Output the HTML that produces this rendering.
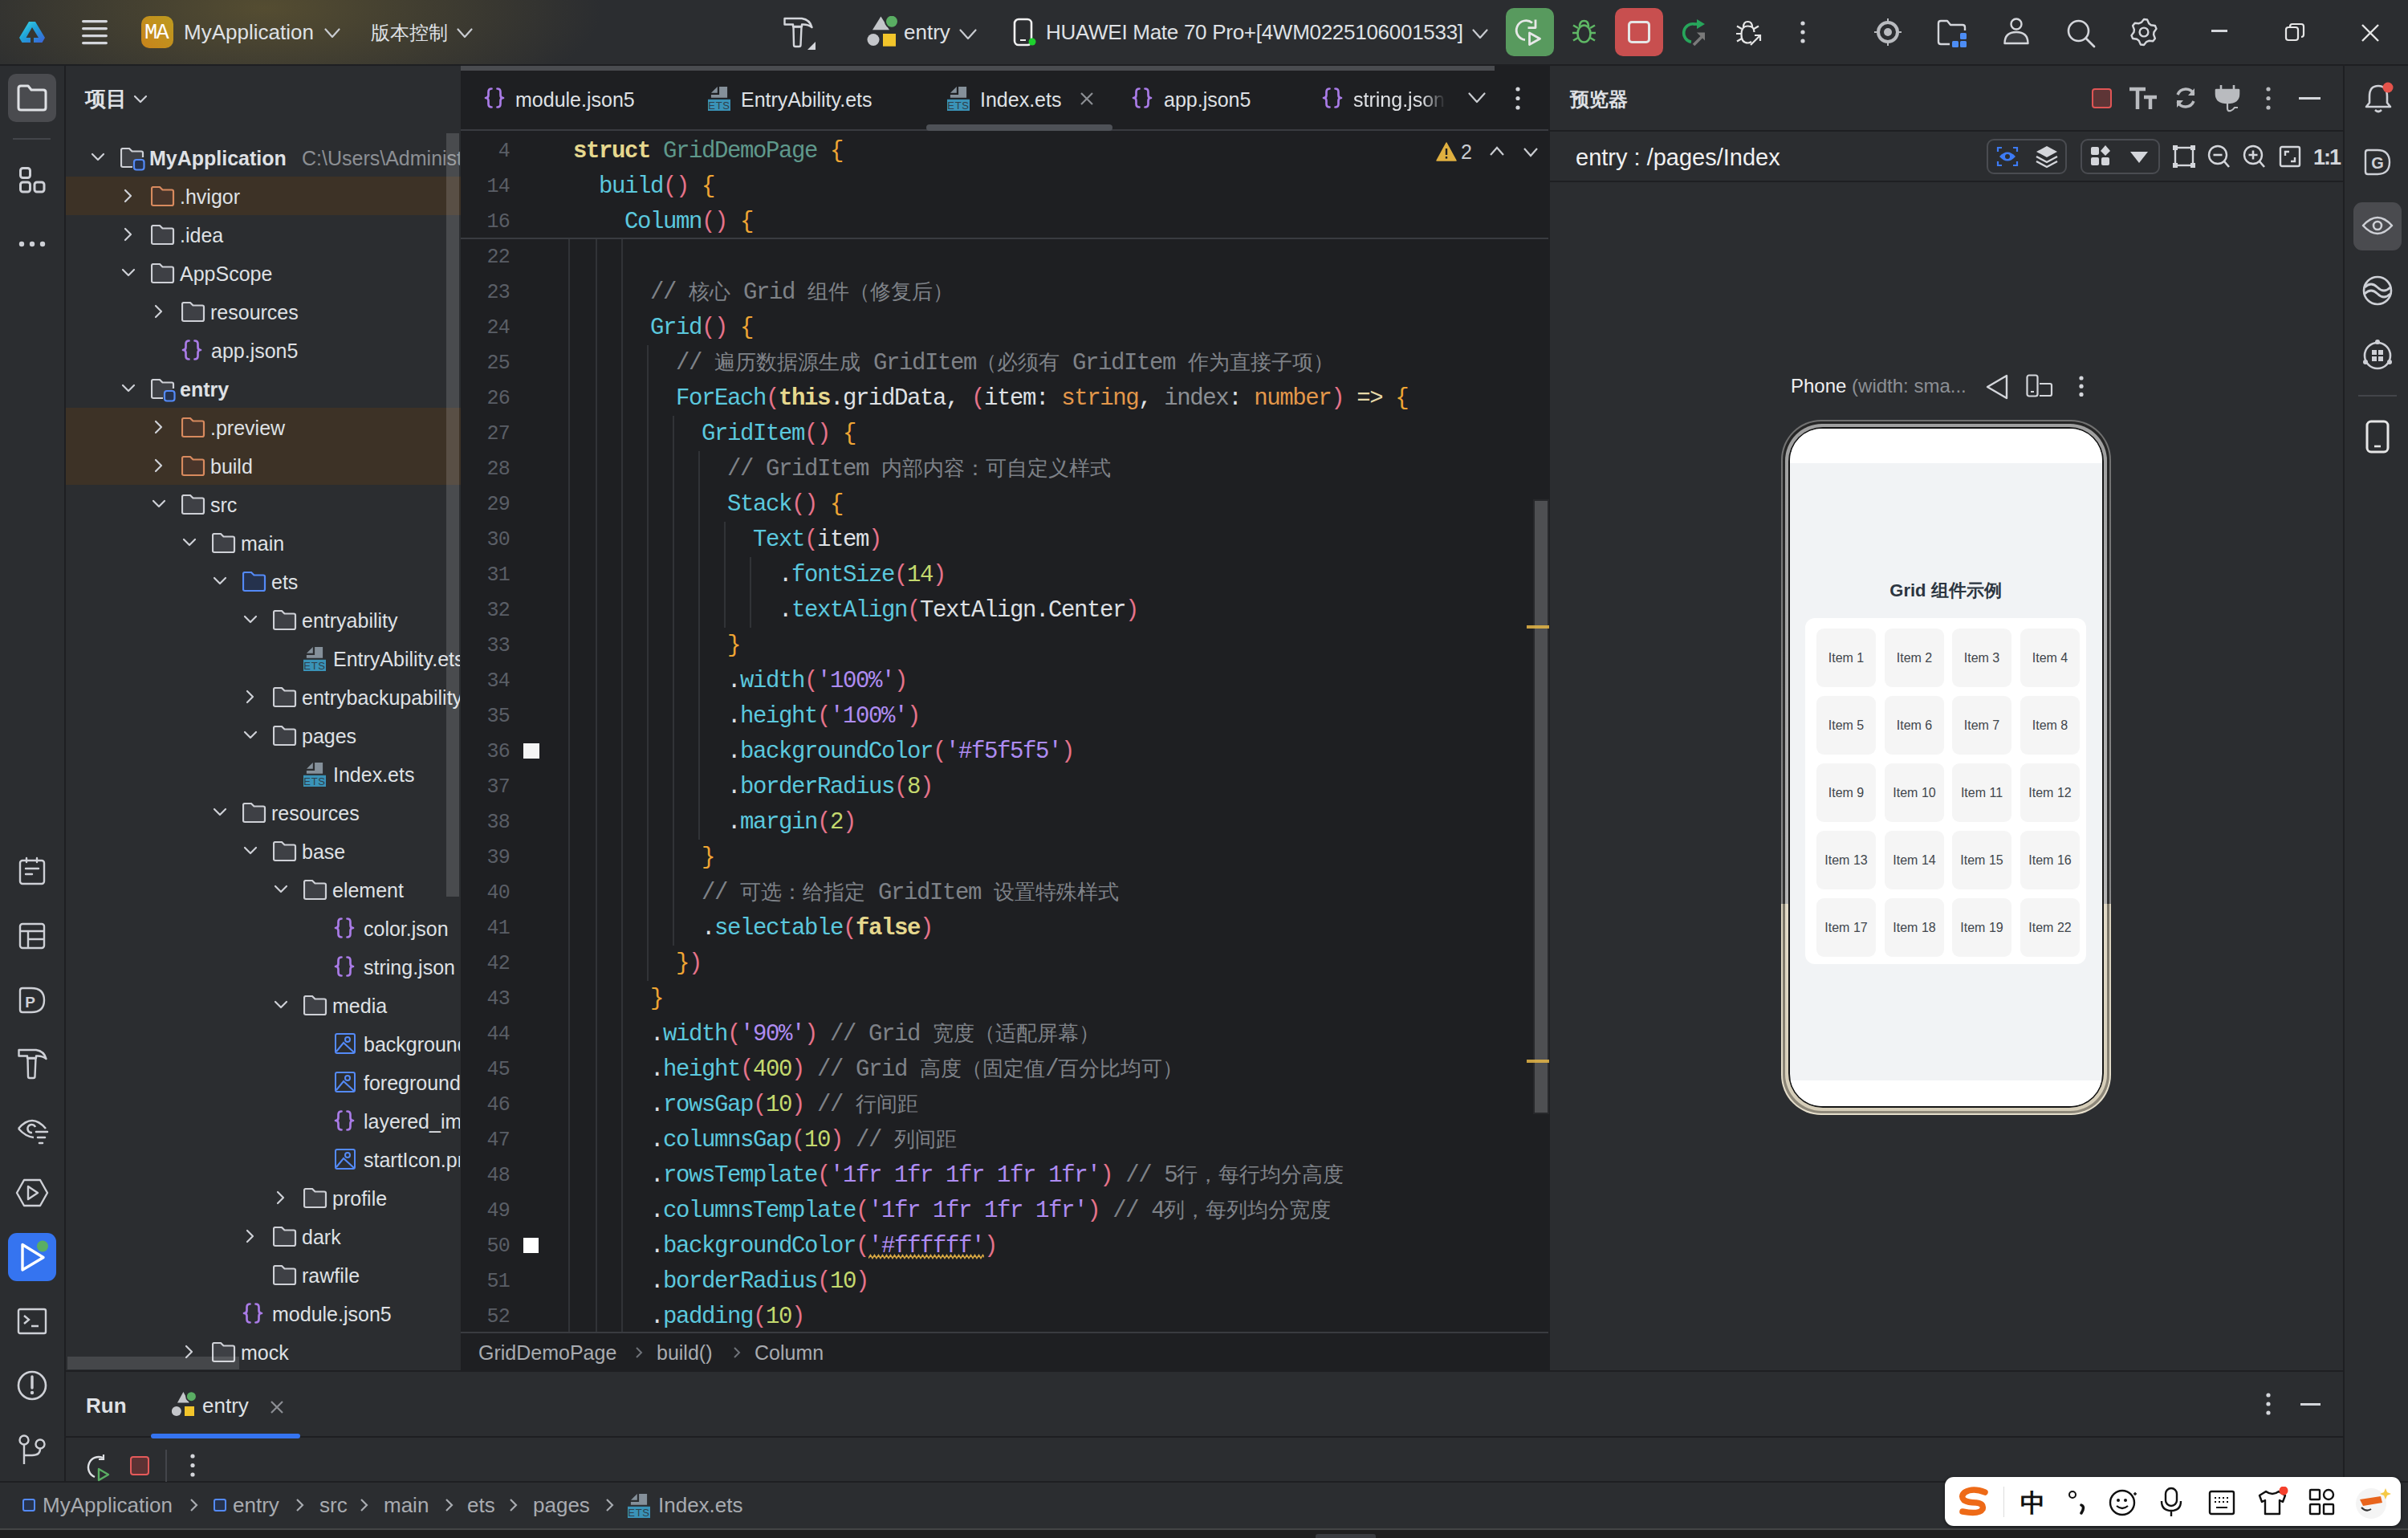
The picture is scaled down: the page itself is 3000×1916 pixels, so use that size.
<!DOCTYPE html><html><head><meta charset="utf-8"><style>
*{margin:0;padding:0;box-sizing:border-box}
html,body{width:3000px;height:1916px;overflow:hidden;background:#2B2D30;font-family:'Liberation Sans', sans-serif}
.a{position:absolute}
.t{white-space:nowrap}
</style></head><body><div class="a" style="left:0px;top:0px;width:3000px;height:80px;background:radial-gradient(ellipse 420px 150px at 330px 10px, rgba(110,96,50,0.62), rgba(43,45,48,0) 100%),#2B2D30"></div><div class="a" style="left:0px;top:80px;width:3000px;height:2px;background:#1E1F22"></div><div class="a" style="left:0px;top:82px;width:80px;height:1764px;background:#2B2D30"></div><div class="a" style="left:80px;top:82px;width:2px;height:1764px;background:#1E1F22"></div><div class="a" style="left:82px;top:82px;width:492px;height:1626px;background:#2B2D30"></div><div class="a" style="left:574px;top:82px;width:1357px;height:1626px;background:#1E1F22"></div><div class="a" style="left:1931px;top:82px;width:990px;height:1626px;background:#2B2D30"></div><div class="a" style="left:1929px;top:82px;width:2px;height:1626px;background:#1E1F22"></div><div class="a" style="left:2921px;top:82px;width:79px;height:1764px;background:#2B2D30"></div><div class="a" style="left:2919px;top:82px;width:2px;height:1764px;background:#1E1F22"></div><div class="a" style="left:82px;top:1708px;width:2837px;height:138px;background:#2B2D30"></div><div class="a" style="left:82px;top:1707px;width:2837px;height:2px;background:#1E1F22"></div><div class="a" style="left:82px;top:1789px;width:2837px;height:2px;background:#1E1F22"></div><div class="a" style="left:0px;top:1845px;width:3000px;height:2px;background:#1E1F22"></div><div class="a" style="left:0px;top:1847px;width:3000px;height:57px;background:#2B2D30"></div><div class="a" style="left:0px;top:1904px;width:3000px;height:2px;background:#444546"></div><div class="a" style="left:0px;top:1906px;width:3000px;height:10px;background:#1F1F1F"></div><div class="a t" style="left:106px;top:102.5px;height:41px;line-height:41px;font-size:26px;color:#DFE1E5;font-weight:bold;font-family:'Liberation Sans', sans-serif;">项目</div><svg class="a" style="left:166px;top:118px;" width="18" height="12" viewBox="0 0 18 12" fill="none"><path d="M2 2 L9 9 L16 2" stroke="#CED0D6" stroke-width="2.2" stroke-linecap="round" stroke-linejoin="round"/></svg><div class="a" style="left:82px;top:220px;width:492px;height:48px;background:#3D3226"></div><div class="a" style="left:82px;top:508px;width:492px;height:96px;background:#3D3226"></div><div class="a" style="left:82px;top:166px;width:491px;height:1540px;overflow:hidden"></div><div class="a" style="left:0;top:166px;width:573px;height:1540px;overflow:hidden"><div class="a" style="left:0;top:-166px;width:573px;height:1916px"><svg class="a" style="left:113px;top:190px;" width="18" height="12" viewBox="0 0 18 12" fill="none"><path d="M2 2 L9 9 L16 2" stroke="#CED0D6" stroke-width="2.2" stroke-linecap="round" stroke-linejoin="round"/></svg><svg class="a" style="left:150px;top:184px;" width="31" height="29" viewBox="0 0 31 29" fill="none"><path d="M28 12 L28 6.5 Q28 4.5 26 4.5 L14.5 4.5 L11 1 L3 1 Q1 1 1 3 L1 22 Q1 24 3 24 L15 24" fill="#3E4045" stroke="#CED0D6" stroke-width="2.2" stroke-linejoin="round"/><rect x="17" y="15" width="12.5" height="12.5" rx="3" fill="#25324D" stroke="#548AF7" stroke-width="2.2"/></svg><div class="a t" style="left:186px;top:177.0px;height:40px;line-height:40px;font-size:25px;color:#DFE1E5;font-weight:bold;font-family:'Liberation Sans', sans-serif;">MyApplication</div><div class="a t" style="left:376px;top:177.0px;height:40px;line-height:40px;font-size:25px;color:#8C8F94;font-weight:normal;font-family:'Liberation Sans', sans-serif;">C:\Users\Administrator\DevEcoStudioProjects\MyApplication</div><svg class="a" style="left:153px;top:235px;" width="14" height="18" viewBox="0 0 14 18" fill="none"><path d="M3 2 L10 9 L3 16" stroke="#CED0D6" stroke-width="2.2" stroke-linecap="round" stroke-linejoin="round"/></svg><svg class="a" style="left:188px;top:232px;" width="31" height="29" viewBox="0 0 31 29" fill="none"><path d="M1 3 Q1 1 3 1 L11 1 L14.5 4.5 L26 4.5 Q28 4.5 28 6.5 L28 22 Q28 24 26 24 L3 24 Q1 24 1 22 Z" fill="#49352A" stroke="#D88A5E" stroke-width="2.2" stroke-linejoin="round"/></svg><div class="a t" style="left:224px;top:225.0px;height:40px;line-height:40px;font-size:25px;color:#DFE1E5;font-weight:normal;font-family:'Liberation Sans', sans-serif;">.hvigor</div><svg class="a" style="left:153px;top:283px;" width="14" height="18" viewBox="0 0 14 18" fill="none"><path d="M3 2 L10 9 L3 16" stroke="#CED0D6" stroke-width="2.2" stroke-linecap="round" stroke-linejoin="round"/></svg><svg class="a" style="left:188px;top:280px;" width="31" height="29" viewBox="0 0 31 29" fill="none"><path d="M1 3 Q1 1 3 1 L11 1 L14.5 4.5 L26 4.5 Q28 4.5 28 6.5 L28 22 Q28 24 26 24 L3 24 Q1 24 1 22 Z" fill="#3E4045" stroke="#CED0D6" stroke-width="2.2" stroke-linejoin="round"/></svg><div class="a t" style="left:224px;top:273.0px;height:40px;line-height:40px;font-size:25px;color:#DFE1E5;font-weight:normal;font-family:'Liberation Sans', sans-serif;">.idea</div><svg class="a" style="left:151px;top:334px;" width="18" height="12" viewBox="0 0 18 12" fill="none"><path d="M2 2 L9 9 L16 2" stroke="#CED0D6" stroke-width="2.2" stroke-linecap="round" stroke-linejoin="round"/></svg><svg class="a" style="left:188px;top:328px;" width="31" height="29" viewBox="0 0 31 29" fill="none"><path d="M1 3 Q1 1 3 1 L11 1 L14.5 4.5 L26 4.5 Q28 4.5 28 6.5 L28 22 Q28 24 26 24 L3 24 Q1 24 1 22 Z" fill="#3E4045" stroke="#CED0D6" stroke-width="2.2" stroke-linejoin="round"/></svg><div class="a t" style="left:224px;top:321.0px;height:40px;line-height:40px;font-size:25px;color:#DFE1E5;font-weight:normal;font-family:'Liberation Sans', sans-serif;">AppScope</div><svg class="a" style="left:191px;top:379px;" width="14" height="18" viewBox="0 0 14 18" fill="none"><path d="M3 2 L10 9 L3 16" stroke="#CED0D6" stroke-width="2.2" stroke-linecap="round" stroke-linejoin="round"/></svg><svg class="a" style="left:226px;top:376px;" width="31" height="29" viewBox="0 0 31 29" fill="none"><path d="M1 3 Q1 1 3 1 L11 1 L14.5 4.5 L26 4.5 Q28 4.5 28 6.5 L28 22 Q28 24 26 24 L3 24 Q1 24 1 22 Z" fill="#3E4045" stroke="#CED0D6" stroke-width="2.2" stroke-linejoin="round"/></svg><div class="a t" style="left:262px;top:369.0px;height:40px;line-height:40px;font-size:25px;color:#DFE1E5;font-weight:normal;font-family:'Liberation Sans', sans-serif;">resources</div><svg class="a" style="left:226px;top:422px;" width="26" height="28" viewBox="0 0 26 28" fill="none"><path d="M9.5 2.5 Q5.5 2.5 5.5 6.5 L5.5 10.5 Q5.5 14 2 14 Q5.5 14 5.5 17.5 L5.5 21.5 Q5.5 25.5 9.5 25.5 M16.5 2.5 Q20.5 2.5 20.5 6.5 L20.5 10.5 Q20.5 14 24 14 Q20.5 14 20.5 17.5 L20.5 21.5 Q20.5 25.5 16.5 25.5" stroke="#A97BE6" stroke-width="2.7" stroke-linecap="round" stroke-linejoin="round"/></svg><div class="a t" style="left:263px;top:417.0px;height:40px;line-height:40px;font-size:25px;color:#DFE1E5;font-weight:normal;font-family:'Liberation Sans', sans-serif;">app.json5</div><svg class="a" style="left:151px;top:478px;" width="18" height="12" viewBox="0 0 18 12" fill="none"><path d="M2 2 L9 9 L16 2" stroke="#CED0D6" stroke-width="2.2" stroke-linecap="round" stroke-linejoin="round"/></svg><svg class="a" style="left:188px;top:472px;" width="31" height="29" viewBox="0 0 31 29" fill="none"><path d="M28 12 L28 6.5 Q28 4.5 26 4.5 L14.5 4.5 L11 1 L3 1 Q1 1 1 3 L1 22 Q1 24 3 24 L15 24" fill="#3E4045" stroke="#CED0D6" stroke-width="2.2" stroke-linejoin="round"/><rect x="17" y="15" width="12.5" height="12.5" rx="3" fill="#25324D" stroke="#548AF7" stroke-width="2.2"/></svg><div class="a t" style="left:224px;top:465.0px;height:40px;line-height:40px;font-size:25px;color:#DFE1E5;font-weight:bold;font-family:'Liberation Sans', sans-serif;">entry</div><svg class="a" style="left:191px;top:523px;" width="14" height="18" viewBox="0 0 14 18" fill="none"><path d="M3 2 L10 9 L3 16" stroke="#CED0D6" stroke-width="2.2" stroke-linecap="round" stroke-linejoin="round"/></svg><svg class="a" style="left:226px;top:520px;" width="31" height="29" viewBox="0 0 31 29" fill="none"><path d="M1 3 Q1 1 3 1 L11 1 L14.5 4.5 L26 4.5 Q28 4.5 28 6.5 L28 22 Q28 24 26 24 L3 24 Q1 24 1 22 Z" fill="#49352A" stroke="#D88A5E" stroke-width="2.2" stroke-linejoin="round"/></svg><div class="a t" style="left:262px;top:513.0px;height:40px;line-height:40px;font-size:25px;color:#DFE1E5;font-weight:normal;font-family:'Liberation Sans', sans-serif;">.preview</div><svg class="a" style="left:191px;top:571px;" width="14" height="18" viewBox="0 0 14 18" fill="none"><path d="M3 2 L10 9 L3 16" stroke="#CED0D6" stroke-width="2.2" stroke-linecap="round" stroke-linejoin="round"/></svg><svg class="a" style="left:226px;top:568px;" width="31" height="29" viewBox="0 0 31 29" fill="none"><path d="M1 3 Q1 1 3 1 L11 1 L14.5 4.5 L26 4.5 Q28 4.5 28 6.5 L28 22 Q28 24 26 24 L3 24 Q1 24 1 22 Z" fill="#49352A" stroke="#D88A5E" stroke-width="2.2" stroke-linejoin="round"/></svg><div class="a t" style="left:262px;top:561.0px;height:40px;line-height:40px;font-size:25px;color:#DFE1E5;font-weight:normal;font-family:'Liberation Sans', sans-serif;">build</div><svg class="a" style="left:189px;top:622px;" width="18" height="12" viewBox="0 0 18 12" fill="none"><path d="M2 2 L9 9 L16 2" stroke="#CED0D6" stroke-width="2.2" stroke-linecap="round" stroke-linejoin="round"/></svg><svg class="a" style="left:226px;top:616px;" width="31" height="29" viewBox="0 0 31 29" fill="none"><path d="M1 3 Q1 1 3 1 L11 1 L14.5 4.5 L26 4.5 Q28 4.5 28 6.5 L28 22 Q28 24 26 24 L3 24 Q1 24 1 22 Z" fill="#3E4045" stroke="#CED0D6" stroke-width="2.2" stroke-linejoin="round"/></svg><div class="a t" style="left:262px;top:609.0px;height:40px;line-height:40px;font-size:25px;color:#DFE1E5;font-weight:normal;font-family:'Liberation Sans', sans-serif;">src</div><svg class="a" style="left:227px;top:670px;" width="18" height="12" viewBox="0 0 18 12" fill="none"><path d="M2 2 L9 9 L16 2" stroke="#CED0D6" stroke-width="2.2" stroke-linecap="round" stroke-linejoin="round"/></svg><svg class="a" style="left:264px;top:664px;" width="31" height="29" viewBox="0 0 31 29" fill="none"><path d="M1 3 Q1 1 3 1 L11 1 L14.5 4.5 L26 4.5 Q28 4.5 28 6.5 L28 22 Q28 24 26 24 L3 24 Q1 24 1 22 Z" fill="#3E4045" stroke="#CED0D6" stroke-width="2.2" stroke-linejoin="round"/></svg><div class="a t" style="left:300px;top:657.0px;height:40px;line-height:40px;font-size:25px;color:#DFE1E5;font-weight:normal;font-family:'Liberation Sans', sans-serif;">main</div><svg class="a" style="left:265px;top:718px;" width="18" height="12" viewBox="0 0 18 12" fill="none"><path d="M2 2 L9 9 L16 2" stroke="#CED0D6" stroke-width="2.2" stroke-linecap="round" stroke-linejoin="round"/></svg><svg class="a" style="left:302px;top:712px;" width="31" height="29" viewBox="0 0 31 29" fill="none"><path d="M1 3 Q1 1 3 1 L11 1 L14.5 4.5 L26 4.5 Q28 4.5 28 6.5 L28 22 Q28 24 26 24 L3 24 Q1 24 1 22 Z" fill="#25324D" stroke="#548AF7" stroke-width="2.2" stroke-linejoin="round"/></svg><div class="a t" style="left:338px;top:705.0px;height:40px;line-height:40px;font-size:25px;color:#DFE1E5;font-weight:normal;font-family:'Liberation Sans', sans-serif;">ets</div><svg class="a" style="left:303px;top:766px;" width="18" height="12" viewBox="0 0 18 12" fill="none"><path d="M2 2 L9 9 L16 2" stroke="#CED0D6" stroke-width="2.2" stroke-linecap="round" stroke-linejoin="round"/></svg><svg class="a" style="left:340px;top:760px;" width="31" height="29" viewBox="0 0 31 29" fill="none"><path d="M1 3 Q1 1 3 1 L11 1 L14.5 4.5 L26 4.5 Q28 4.5 28 6.5 L28 22 Q28 24 26 24 L3 24 Q1 24 1 22 Z" fill="#3E4045" stroke="#CED0D6" stroke-width="2.2" stroke-linejoin="round"/></svg><div class="a t" style="left:376px;top:753.0px;height:40px;line-height:40px;font-size:25px;color:#DFE1E5;font-weight:normal;font-family:'Liberation Sans', sans-serif;">entryability</div><svg class="a" style="left:378px;top:805px;" width="30" height="32" viewBox="0 0 30 32" fill="none"><path d="M4 8.8 L11.8 0.9 L11.8 8.8 Z" fill="#85909A"/><path d="M14.1 0.9 L24.1 0.9 L24.1 14.8 L3.9 14.8 L3.9 11.1 L14.1 11.1 Z" fill="#85909A"/><rect x="0" y="16.8" width="28" height="14.2" fill="#3A93B8"/><text x="14" y="29" font-family="Liberation Sans" font-size="13" fill="#2F3F4A" text-anchor="middle" letter-spacing="0.8">ETS</text></svg><div class="a t" style="left:415px;top:801.0px;height:40px;line-height:40px;font-size:25px;color:#DFE1E5;font-weight:normal;font-family:'Liberation Sans', sans-serif;">EntryAbility.ets</div><svg class="a" style="left:305px;top:859px;" width="14" height="18" viewBox="0 0 14 18" fill="none"><path d="M3 2 L10 9 L3 16" stroke="#CED0D6" stroke-width="2.2" stroke-linecap="round" stroke-linejoin="round"/></svg><svg class="a" style="left:340px;top:856px;" width="31" height="29" viewBox="0 0 31 29" fill="none"><path d="M1 3 Q1 1 3 1 L11 1 L14.5 4.5 L26 4.5 Q28 4.5 28 6.5 L28 22 Q28 24 26 24 L3 24 Q1 24 1 22 Z" fill="#3E4045" stroke="#CED0D6" stroke-width="2.2" stroke-linejoin="round"/></svg><div class="a t" style="left:376px;top:849.0px;height:40px;line-height:40px;font-size:25px;color:#DFE1E5;font-weight:normal;font-family:'Liberation Sans', sans-serif;">entrybackupability</div><svg class="a" style="left:303px;top:910px;" width="18" height="12" viewBox="0 0 18 12" fill="none"><path d="M2 2 L9 9 L16 2" stroke="#CED0D6" stroke-width="2.2" stroke-linecap="round" stroke-linejoin="round"/></svg><svg class="a" style="left:340px;top:904px;" width="31" height="29" viewBox="0 0 31 29" fill="none"><path d="M1 3 Q1 1 3 1 L11 1 L14.5 4.5 L26 4.5 Q28 4.5 28 6.5 L28 22 Q28 24 26 24 L3 24 Q1 24 1 22 Z" fill="#3E4045" stroke="#CED0D6" stroke-width="2.2" stroke-linejoin="round"/></svg><div class="a t" style="left:376px;top:897.0px;height:40px;line-height:40px;font-size:25px;color:#DFE1E5;font-weight:normal;font-family:'Liberation Sans', sans-serif;">pages</div><svg class="a" style="left:378px;top:949px;" width="30" height="32" viewBox="0 0 30 32" fill="none"><path d="M4 8.8 L11.8 0.9 L11.8 8.8 Z" fill="#85909A"/><path d="M14.1 0.9 L24.1 0.9 L24.1 14.8 L3.9 14.8 L3.9 11.1 L14.1 11.1 Z" fill="#85909A"/><rect x="0" y="16.8" width="28" height="14.2" fill="#3A93B8"/><text x="14" y="29" font-family="Liberation Sans" font-size="13" fill="#2F3F4A" text-anchor="middle" letter-spacing="0.8">ETS</text></svg><div class="a t" style="left:415px;top:945.0px;height:40px;line-height:40px;font-size:25px;color:#DFE1E5;font-weight:normal;font-family:'Liberation Sans', sans-serif;">Index.ets</div><svg class="a" style="left:265px;top:1006px;" width="18" height="12" viewBox="0 0 18 12" fill="none"><path d="M2 2 L9 9 L16 2" stroke="#CED0D6" stroke-width="2.2" stroke-linecap="round" stroke-linejoin="round"/></svg><svg class="a" style="left:302px;top:1000px;" width="31" height="29" viewBox="0 0 31 29" fill="none"><path d="M1 3 Q1 1 3 1 L11 1 L14.5 4.5 L26 4.5 Q28 4.5 28 6.5 L28 22 Q28 24 26 24 L3 24 Q1 24 1 22 Z" fill="#3E4045" stroke="#CED0D6" stroke-width="2.2" stroke-linejoin="round"/></svg><div class="a t" style="left:338px;top:993.0px;height:40px;line-height:40px;font-size:25px;color:#DFE1E5;font-weight:normal;font-family:'Liberation Sans', sans-serif;">resources</div><svg class="a" style="left:303px;top:1054px;" width="18" height="12" viewBox="0 0 18 12" fill="none"><path d="M2 2 L9 9 L16 2" stroke="#CED0D6" stroke-width="2.2" stroke-linecap="round" stroke-linejoin="round"/></svg><svg class="a" style="left:340px;top:1048px;" width="31" height="29" viewBox="0 0 31 29" fill="none"><path d="M1 3 Q1 1 3 1 L11 1 L14.5 4.5 L26 4.5 Q28 4.5 28 6.5 L28 22 Q28 24 26 24 L3 24 Q1 24 1 22 Z" fill="#3E4045" stroke="#CED0D6" stroke-width="2.2" stroke-linejoin="round"/></svg><div class="a t" style="left:376px;top:1041.0px;height:40px;line-height:40px;font-size:25px;color:#DFE1E5;font-weight:normal;font-family:'Liberation Sans', sans-serif;">base</div><svg class="a" style="left:341px;top:1102px;" width="18" height="12" viewBox="0 0 18 12" fill="none"><path d="M2 2 L9 9 L16 2" stroke="#CED0D6" stroke-width="2.2" stroke-linecap="round" stroke-linejoin="round"/></svg><svg class="a" style="left:378px;top:1096px;" width="31" height="29" viewBox="0 0 31 29" fill="none"><path d="M1 3 Q1 1 3 1 L11 1 L14.5 4.5 L26 4.5 Q28 4.5 28 6.5 L28 22 Q28 24 26 24 L3 24 Q1 24 1 22 Z" fill="#3E4045" stroke="#CED0D6" stroke-width="2.2" stroke-linejoin="round"/></svg><div class="a t" style="left:414px;top:1089.0px;height:40px;line-height:40px;font-size:25px;color:#DFE1E5;font-weight:normal;font-family:'Liberation Sans', sans-serif;">element</div><svg class="a" style="left:416px;top:1142px;" width="26" height="28" viewBox="0 0 26 28" fill="none"><path d="M9.5 2.5 Q5.5 2.5 5.5 6.5 L5.5 10.5 Q5.5 14 2 14 Q5.5 14 5.5 17.5 L5.5 21.5 Q5.5 25.5 9.5 25.5 M16.5 2.5 Q20.5 2.5 20.5 6.5 L20.5 10.5 Q20.5 14 24 14 Q20.5 14 20.5 17.5 L20.5 21.5 Q20.5 25.5 16.5 25.5" stroke="#A97BE6" stroke-width="2.7" stroke-linecap="round" stroke-linejoin="round"/></svg><div class="a t" style="left:453px;top:1137.0px;height:40px;line-height:40px;font-size:25px;color:#DFE1E5;font-weight:normal;font-family:'Liberation Sans', sans-serif;">color.json</div><svg class="a" style="left:416px;top:1190px;" width="26" height="28" viewBox="0 0 26 28" fill="none"><path d="M9.5 2.5 Q5.5 2.5 5.5 6.5 L5.5 10.5 Q5.5 14 2 14 Q5.5 14 5.5 17.5 L5.5 21.5 Q5.5 25.5 9.5 25.5 M16.5 2.5 Q20.5 2.5 20.5 6.5 L20.5 10.5 Q20.5 14 24 14 Q20.5 14 20.5 17.5 L20.5 21.5 Q20.5 25.5 16.5 25.5" stroke="#A97BE6" stroke-width="2.7" stroke-linecap="round" stroke-linejoin="round"/></svg><div class="a t" style="left:453px;top:1185.0px;height:40px;line-height:40px;font-size:25px;color:#DFE1E5;font-weight:normal;font-family:'Liberation Sans', sans-serif;">string.json</div><svg class="a" style="left:341px;top:1246px;" width="18" height="12" viewBox="0 0 18 12" fill="none"><path d="M2 2 L9 9 L16 2" stroke="#CED0D6" stroke-width="2.2" stroke-linecap="round" stroke-linejoin="round"/></svg><svg class="a" style="left:378px;top:1240px;" width="31" height="29" viewBox="0 0 31 29" fill="none"><path d="M1 3 Q1 1 3 1 L11 1 L14.5 4.5 L26 4.5 Q28 4.5 28 6.5 L28 22 Q28 24 26 24 L3 24 Q1 24 1 22 Z" fill="#3E4045" stroke="#CED0D6" stroke-width="2.2" stroke-linejoin="round"/></svg><div class="a t" style="left:414px;top:1233.0px;height:40px;line-height:40px;font-size:25px;color:#DFE1E5;font-weight:normal;font-family:'Liberation Sans', sans-serif;">media</div><svg class="a" style="left:416px;top:1286px;" width="28" height="28" viewBox="0 0 28 28" fill="none"><rect x="2" y="2" width="24" height="24" rx="2" stroke="#548AF7" stroke-width="2"/><circle cx="17" cy="9" r="3" stroke="#548AF7" stroke-width="2"/><path d="M3 24 L12 13 L25 25" stroke="#548AF7" stroke-width="2"/></svg><div class="a t" style="left:453px;top:1281.0px;height:40px;line-height:40px;font-size:25px;color:#DFE1E5;font-weight:normal;font-family:'Liberation Sans', sans-serif;">background.png</div><svg class="a" style="left:416px;top:1334px;" width="28" height="28" viewBox="0 0 28 28" fill="none"><rect x="2" y="2" width="24" height="24" rx="2" stroke="#548AF7" stroke-width="2"/><circle cx="17" cy="9" r="3" stroke="#548AF7" stroke-width="2"/><path d="M3 24 L12 13 L25 25" stroke="#548AF7" stroke-width="2"/></svg><div class="a t" style="left:453px;top:1329.0px;height:40px;line-height:40px;font-size:25px;color:#DFE1E5;font-weight:normal;font-family:'Liberation Sans', sans-serif;">foreground.png</div><svg class="a" style="left:416px;top:1382px;" width="26" height="28" viewBox="0 0 26 28" fill="none"><path d="M9.5 2.5 Q5.5 2.5 5.5 6.5 L5.5 10.5 Q5.5 14 2 14 Q5.5 14 5.5 17.5 L5.5 21.5 Q5.5 25.5 9.5 25.5 M16.5 2.5 Q20.5 2.5 20.5 6.5 L20.5 10.5 Q20.5 14 24 14 Q20.5 14 20.5 17.5 L20.5 21.5 Q20.5 25.5 16.5 25.5" stroke="#A97BE6" stroke-width="2.7" stroke-linecap="round" stroke-linejoin="round"/></svg><div class="a t" style="left:453px;top:1377.0px;height:40px;line-height:40px;font-size:25px;color:#DFE1E5;font-weight:normal;font-family:'Liberation Sans', sans-serif;">layered_image.json</div><svg class="a" style="left:416px;top:1430px;" width="28" height="28" viewBox="0 0 28 28" fill="none"><rect x="2" y="2" width="24" height="24" rx="2" stroke="#548AF7" stroke-width="2"/><circle cx="17" cy="9" r="3" stroke="#548AF7" stroke-width="2"/><path d="M3 24 L12 13 L25 25" stroke="#548AF7" stroke-width="2"/></svg><div class="a t" style="left:453px;top:1425.0px;height:40px;line-height:40px;font-size:25px;color:#DFE1E5;font-weight:normal;font-family:'Liberation Sans', sans-serif;">startIcon.png</div><svg class="a" style="left:343px;top:1483px;" width="14" height="18" viewBox="0 0 14 18" fill="none"><path d="M3 2 L10 9 L3 16" stroke="#CED0D6" stroke-width="2.2" stroke-linecap="round" stroke-linejoin="round"/></svg><svg class="a" style="left:378px;top:1480px;" width="31" height="29" viewBox="0 0 31 29" fill="none"><path d="M1 3 Q1 1 3 1 L11 1 L14.5 4.5 L26 4.5 Q28 4.5 28 6.5 L28 22 Q28 24 26 24 L3 24 Q1 24 1 22 Z" fill="#3E4045" stroke="#CED0D6" stroke-width="2.2" stroke-linejoin="round"/></svg><div class="a t" style="left:414px;top:1473.0px;height:40px;line-height:40px;font-size:25px;color:#DFE1E5;font-weight:normal;font-family:'Liberation Sans', sans-serif;">profile</div><svg class="a" style="left:305px;top:1531px;" width="14" height="18" viewBox="0 0 14 18" fill="none"><path d="M3 2 L10 9 L3 16" stroke="#CED0D6" stroke-width="2.2" stroke-linecap="round" stroke-linejoin="round"/></svg><svg class="a" style="left:340px;top:1528px;" width="31" height="29" viewBox="0 0 31 29" fill="none"><path d="M1 3 Q1 1 3 1 L11 1 L14.5 4.5 L26 4.5 Q28 4.5 28 6.5 L28 22 Q28 24 26 24 L3 24 Q1 24 1 22 Z" fill="#3E4045" stroke="#CED0D6" stroke-width="2.2" stroke-linejoin="round"/></svg><div class="a t" style="left:376px;top:1521.0px;height:40px;line-height:40px;font-size:25px;color:#DFE1E5;font-weight:normal;font-family:'Liberation Sans', sans-serif;">dark</div><svg class="a" style="left:340px;top:1576px;" width="31" height="29" viewBox="0 0 31 29" fill="none"><path d="M1 3 Q1 1 3 1 L11 1 L14.5 4.5 L26 4.5 Q28 4.5 28 6.5 L28 22 Q28 24 26 24 L3 24 Q1 24 1 22 Z" fill="#3E4045" stroke="#CED0D6" stroke-width="2.2" stroke-linejoin="round"/></svg><div class="a t" style="left:376px;top:1569.0px;height:40px;line-height:40px;font-size:25px;color:#DFE1E5;font-weight:normal;font-family:'Liberation Sans', sans-serif;">rawfile</div><svg class="a" style="left:302px;top:1622px;" width="26" height="28" viewBox="0 0 26 28" fill="none"><path d="M9.5 2.5 Q5.5 2.5 5.5 6.5 L5.5 10.5 Q5.5 14 2 14 Q5.5 14 5.5 17.5 L5.5 21.5 Q5.5 25.5 9.5 25.5 M16.5 2.5 Q20.5 2.5 20.5 6.5 L20.5 10.5 Q20.5 14 24 14 Q20.5 14 20.5 17.5 L20.5 21.5 Q20.5 25.5 16.5 25.5" stroke="#A97BE6" stroke-width="2.7" stroke-linecap="round" stroke-linejoin="round"/></svg><div class="a t" style="left:339px;top:1617.0px;height:40px;line-height:40px;font-size:25px;color:#DFE1E5;font-weight:normal;font-family:'Liberation Sans', sans-serif;">module.json5</div><svg class="a" style="left:229px;top:1675px;" width="14" height="18" viewBox="0 0 14 18" fill="none"><path d="M3 2 L10 9 L3 16" stroke="#CED0D6" stroke-width="2.2" stroke-linecap="round" stroke-linejoin="round"/></svg><svg class="a" style="left:264px;top:1672px;" width="31" height="29" viewBox="0 0 31 29" fill="none"><path d="M1 3 Q1 1 3 1 L11 1 L14.5 4.5 L26 4.5 Q28 4.5 28 6.5 L28 22 Q28 24 26 24 L3 24 Q1 24 1 22 Z" fill="#3E4045" stroke="#CED0D6" stroke-width="2.2" stroke-linejoin="round"/></svg><div class="a t" style="left:300px;top:1665.0px;height:40px;line-height:40px;font-size:25px;color:#DFE1E5;font-weight:normal;font-family:'Liberation Sans', sans-serif;">mock</div></div></div><div class="a" style="left:556px;top:166px;width:16px;height:951px;background:rgba(255,255,255,0.145)"></div><div class="a" style="left:84px;top:1690px;width:214px;height:16px;background:rgba(255,255,255,0.125)"></div><style>.cl{position:absolute;white-space:pre;font-family:'Liberation Mono',monospace;font-size:29px;letter-spacing:-1.4px;height:44px;line-height:44px}.k{color:#E6D88E;font-weight:bold}.cn{color:#5F998C}.f{color:#5BC8DE}.p{color:#E5738A}.b{color:#EFA534}.s{color:#AE8CF2}.n{color:#C4D96E}.c{color:#7E8288}.i{color:#DFE1E5}.t{color:#E3974A}.g{color:#8C8F94}.o{color:#DFE1E5}.y{color:#E6D9A8}.zh{font-size:26px;letter-spacing:0}.ln{position:absolute;font-family:'Liberation Mono',monospace;font-size:25px;letter-spacing:-0.8px;color:#5A5E66;text-align:right;width:80px;height:44px;line-height:44px}</style><div class="a" style="left:574px;top:164px;width:1355px;height:134px;background:#1E1F22"></div><div class="a" style="left:708px;top:297.6px;width:2px;height:1361.4px;background:#313337"></div><div class="a" style="left:742px;top:297.6px;width:2px;height:1361.4px;background:#313337"></div><div class="a" style="left:774px;top:297.6px;width:2px;height:1361.4px;background:#313337"></div><div class="a" style="left:806px;top:429.6px;width:2px;height:791.9999999999999px;background:#313337"></div><div class="a" style="left:838px;top:517.6px;width:2px;height:659.9999999999999px;background:#313337"></div><div class="a" style="left:870px;top:561.6px;width:2px;height:483.9999999999999px;background:#313337"></div><div class="a" style="left:902px;top:649.6px;width:2px;height:132.0px;background:#313337"></div><div class="a" style="left:934px;top:693.6px;width:2px;height:88.0px;background:#313337"></div><div class="ln" style="left:555px;top:166.6px">4</div><div class="cl" style="left:714px;top:166.6px"><span class="k">struct</span><span class="o"> </span><span class="cn">GridDemoPage</span><span class="o"> </span><span class="b">{</span></div><div class="ln" style="left:555px;top:210.6px">14</div><div class="cl" style="left:746px;top:210.6px"><span class="f">build</span><span class="p">()</span><span class="o"> </span><span class="b">{</span></div><div class="ln" style="left:555px;top:254.6px">16</div><div class="cl" style="left:778px;top:254.6px"><span class="f">Column</span><span class="p">()</span><span class="o"> </span><span class="b">{</span></div><div class="ln" style="left:555px;top:298.6px">22</div><div class="ln" style="left:555px;top:342.6px">23</div><div class="cl" style="left:810px;top:342.6px"><span class="c">// <span class="zh">核心</span> Grid <span class="zh">组件（修复后）</span></span></div><div class="ln" style="left:555px;top:386.6px">24</div><div class="cl" style="left:810px;top:386.6px"><span class="f">Grid</span><span class="p">()</span><span class="o"> </span><span class="b">{</span></div><div class="ln" style="left:555px;top:430.6px">25</div><div class="cl" style="left:842px;top:430.6px"><span class="c">// <span class="zh">遍历数据源生成</span> GridItem<span class="zh">（必须有</span> GridItem <span class="zh">作为直接子项）</span></span></div><div class="ln" style="left:555px;top:474.6px">26</div><div class="cl" style="left:842px;top:474.6px"><span class="f">ForEach</span><span class="p">(</span><span class="k">this</span><span class="i">.gridData, </span><span class="p">(</span><span class="i">item: </span><span class="t">string</span><span class="i">, </span><span class="g">index</span><span class="i">: </span><span class="t">number</span><span class="p">)</span><span class="y"> =&gt; </span><span class="b">{</span></div><div class="ln" style="left:555px;top:518.6px">27</div><div class="cl" style="left:874px;top:518.6px"><span class="f">GridItem</span><span class="p">()</span><span class="o"> </span><span class="b">{</span></div><div class="ln" style="left:555px;top:562.6px">28</div><div class="cl" style="left:906px;top:562.6px"><span class="c">// GridItem <span class="zh">内部内容：可自定义样式</span></span></div><div class="ln" style="left:555px;top:606.6px">29</div><div class="cl" style="left:906px;top:606.6px"><span class="f">Stack</span><span class="p">()</span><span class="o"> </span><span class="b">{</span></div><div class="ln" style="left:555px;top:650.6px">30</div><div class="cl" style="left:938px;top:650.6px"><span class="f">Text</span><span class="p">(</span><span class="i">item</span><span class="p">)</span></div><div class="ln" style="left:555px;top:694.6px">31</div><div class="cl" style="left:970px;top:694.6px"><span class="i">.</span><span class="f">fontSize</span><span class="p">(</span><span class="n">14</span><span class="p">)</span></div><div class="ln" style="left:555px;top:738.6px">32</div><div class="cl" style="left:970px;top:738.6px"><span class="i">.</span><span class="f">textAlign</span><span class="p">(</span><span class="i">TextAlign.Center</span><span class="p">)</span></div><div class="ln" style="left:555px;top:782.6px">33</div><div class="cl" style="left:906px;top:782.6px"><span class="b">}</span></div><div class="ln" style="left:555px;top:826.6px">34</div><div class="cl" style="left:906px;top:826.6px"><span class="i">.</span><span class="f">width</span><span class="p">(</span><span class="s">&#x27;100%&#x27;</span><span class="p">)</span></div><div class="ln" style="left:555px;top:870.6px">35</div><div class="cl" style="left:906px;top:870.6px"><span class="i">.</span><span class="f">height</span><span class="p">(</span><span class="s">&#x27;100%&#x27;</span><span class="p">)</span></div><div class="ln" style="left:555px;top:914.6px">36</div><div class="cl" style="left:906px;top:914.6px"><span class="i">.</span><span class="f">backgroundColor</span><span class="p">(</span><span class="s">&#x27;#f5f5f5&#x27;</span><span class="p">)</span></div><div class="ln" style="left:555px;top:958.6px">37</div><div class="cl" style="left:906px;top:958.6px"><span class="i">.</span><span class="f">borderRadius</span><span class="p">(</span><span class="n">8</span><span class="p">)</span></div><div class="ln" style="left:555px;top:1002.6px">38</div><div class="cl" style="left:906px;top:1002.6px"><span class="i">.</span><span class="f">margin</span><span class="p">(</span><span class="n">2</span><span class="p">)</span></div><div class="ln" style="left:555px;top:1046.6px">39</div><div class="cl" style="left:874px;top:1046.6px"><span class="b">}</span></div><div class="ln" style="left:555px;top:1090.6px">40</div><div class="cl" style="left:874px;top:1090.6px"><span class="c">// <span class="zh">可选：给指定</span> GridItem <span class="zh">设置特殊样式</span></span></div><div class="ln" style="left:555px;top:1134.6px">41</div><div class="cl" style="left:874px;top:1134.6px"><span class="i">.</span><span class="f">selectable</span><span class="p">(</span><span class="k">false</span><span class="p">)</span></div><div class="ln" style="left:555px;top:1178.6px">42</div><div class="cl" style="left:842px;top:1178.6px"><span class="b">}</span><span class="p">)</span></div><div class="ln" style="left:555px;top:1222.6px">43</div><div class="cl" style="left:810px;top:1222.6px"><span class="b">}</span></div><div class="ln" style="left:555px;top:1266.6px">44</div><div class="cl" style="left:810px;top:1266.6px"><span class="i">.</span><span class="f">width</span><span class="p">(</span><span class="s">&#x27;90%&#x27;</span><span class="p">)</span><span class="c"> // Grid <span class="zh">宽度（适配屏幕）</span></span></div><div class="ln" style="left:555px;top:1310.6px">45</div><div class="cl" style="left:810px;top:1310.6px"><span class="i">.</span><span class="f">height</span><span class="p">(</span><span class="n">400</span><span class="p">)</span><span class="c"> // Grid <span class="zh">高度（固定值</span>/<span class="zh">百分比均可）</span></span></div><div class="ln" style="left:555px;top:1354.6px">46</div><div class="cl" style="left:810px;top:1354.6px"><span class="i">.</span><span class="f">rowsGap</span><span class="p">(</span><span class="n">10</span><span class="p">)</span><span class="c"> // <span class="zh">行间距</span></span></div><div class="ln" style="left:555px;top:1398.6px">47</div><div class="cl" style="left:810px;top:1398.6px"><span class="i">.</span><span class="f">columnsGap</span><span class="p">(</span><span class="n">10</span><span class="p">)</span><span class="c"> // <span class="zh">列间距</span></span></div><div class="ln" style="left:555px;top:1442.6px">48</div><div class="cl" style="left:810px;top:1442.6px"><span class="i">.</span><span class="f">rowsTemplate</span><span class="p">(</span><span class="s">&#x27;1fr 1fr 1fr 1fr 1fr&#x27;</span><span class="p">)</span><span class="c"> // 5<span class="zh">行，每行均分高度</span></span></div><div class="ln" style="left:555px;top:1486.6px">49</div><div class="cl" style="left:810px;top:1486.6px"><span class="i">.</span><span class="f">columnsTemplate</span><span class="p">(</span><span class="s">&#x27;1fr 1fr 1fr 1fr&#x27;</span><span class="p">)</span><span class="c"> // 4<span class="zh">列，每列均分宽度</span></span></div><div class="ln" style="left:555px;top:1530.6px">50</div><div class="cl" style="left:810px;top:1530.6px"><span class="i">.</span><span class="f">backgroundColor</span><span class="p">(</span><span class="s">&#x27;#ffffff&#x27;</span><span class="p">)</span></div><div class="ln" style="left:555px;top:1574.6px">51</div><div class="cl" style="left:810px;top:1574.6px"><span class="i">.</span><span class="f">borderRadius</span><span class="p">(</span><span class="n">10</span><span class="p">)</span></div><div class="ln" style="left:555px;top:1618.6px">52</div><div class="cl" style="left:810px;top:1618.6px"><span class="i">.</span><span class="f">padding</span><span class="p">(</span><span class="n">10</span><span class="p">)</span></div><div class="a" style="left:574px;top:296px;width:1355px;height:2px;background:#393B40"></div><div class="a" style="left:652px;top:926px;width:20px;height:19px;background:#F5F5F5"></div><div class="a" style="left:652px;top:1542px;width:19px;height:19px;background:#FFFFFF"></div><svg class="a" style="left:1082px;top:1561px;" width="144" height="9" viewBox="0 0 144 9" fill="none"><path d="M0 6.5 L2.5 2.5 L5 6.5 L7.5 2.5 L10 6.5 L12.5 2.5 L15 6.5 L17.5 2.5 L20 6.5 L22.5 2.5 L25 6.5 L27.5 2.5 L30 6.5 L32.5 2.5 L35 6.5 L37.5 2.5 L40 6.5 L42.5 2.5 L45 6.5 L47.5 2.5 L50 6.5 L52.5 2.5 L55 6.5 L57.5 2.5 L60 6.5 L62.5 2.5 L65 6.5 L67.5 2.5 L70 6.5 L72.5 2.5 L75 6.5 L77.5 2.5 L80 6.5 L82.5 2.5 L85 6.5 L87.5 2.5 L90 6.5 L92.5 2.5 L95 6.5 L97.5 2.5 L100 6.5 L102.5 2.5 L105 6.5 L107.5 2.5 L110 6.5 L112.5 2.5 L115 6.5 L117.5 2.5 L120 6.5 L122.5 2.5 L125 6.5 L127.5 2.5 L130 6.5 L132.5 2.5 L135 6.5 L137.5 2.5 L140 6.5 L142.5 2.5 L145 6.5" stroke="#D9A943" stroke-width="1.5" fill="none"/></svg><div class="a" style="left:1910px;top:622px;width:20px;height:766px;background:#27282B"></div><div class="a" style="left:1912px;top:624px;width:16px;height:762px;background:#4E4F52"></div><div class="a" style="left:1902px;top:779px;width:28px;height:4px;background:rgba(230,182,70,0.85)"></div><div class="a" style="left:1902px;top:1320px;width:28px;height:4px;background:rgba(230,182,70,0.85)"></div><div class="a" style="left:574px;top:1659px;width:1355px;height:2px;background:#393B40"></div><div class="a t" style="left:596px;top:1665.0px;height:40px;line-height:40px;font-size:25px;color:#A8ABB0;font-weight:normal;font-family:'Liberation Sans', sans-serif;">GridDemoPage</div><svg class="a" style="left:790px;top:1677px;" width="12" height="16" viewBox="0 0 12 16" fill="none"><path d="M3 2 L9 8 L3 14" stroke="#6F737A" stroke-width="2" fill="none"/></svg><div class="a t" style="left:818px;top:1665.0px;height:40px;line-height:40px;font-size:25px;color:#A8ABB0;font-weight:normal;font-family:'Liberation Sans', sans-serif;">build()</div><svg class="a" style="left:912px;top:1677px;" width="12" height="16" viewBox="0 0 12 16" fill="none"><path d="M3 2 L9 8 L3 14" stroke="#6F737A" stroke-width="2" fill="none"/></svg><div class="a t" style="left:940px;top:1665.0px;height:40px;line-height:40px;font-size:25px;color:#A8ABB0;font-weight:normal;font-family:'Liberation Sans', sans-serif;">Column</div><svg class="a" style="left:1789px;top:177px;" width="26" height="24" viewBox="0 0 26 24" fill="none"><path d="M13 1 L25 23 L1 23 Z" fill="#E0B040" stroke="#E0B040" stroke-width="1.5" stroke-linejoin="round"/><rect x="11.8" y="8" width="2.4" height="8" fill="#1E1F22"/><rect x="11.8" y="18" width="2.4" height="2.6" fill="#1E1F22"/></svg><div class="a t" style="left:1820px;top:169.0px;height:40px;line-height:40px;font-size:25px;color:#C9CCD1;font-weight:normal;font-family:'Liberation Sans', sans-serif;">2</div><svg class="a" style="left:1855px;top:181px;" width="20" height="14" viewBox="0 0 20 14" fill="none"><path d="M2 12 L10 3 L18 12" stroke="#C9CCD1" stroke-width="2.2" fill="none"/></svg><svg class="a" style="left:1897px;top:183px;" width="20" height="14" viewBox="0 0 20 14" fill="none"><path d="M2 2 L10 11 L18 2" stroke="#C9CCD1" stroke-width="2.2" fill="none"/></svg><svg class="a" style="left:22px;top:25px;" width="36" height="30" viewBox="0 0 36 30" fill="none"><defs><linearGradient id="lg1" x1="0" y1="0" x2="1" y2="1"><stop offset="0" stop-color="#45E0E8"/><stop offset="0.45" stop-color="#1FA3D8"/><stop offset="1" stop-color="#3E5FD8"/></linearGradient></defs><path d="M14 2 L22 2 L34 22 L30.5 28 L20 28 L20 22 L26 22 L18 9 L10.5 22 L16 22 L16 28 L5.5 28 L2 22 Z" fill="url(#lg1)"/></svg><svg class="a" style="left:100px;top:22px;" width="36" height="36" viewBox="0 0 36 36" fill="none"><rect x="2" y="3" width="32" height="3.2" rx="1.6" fill="#D4D6DB"/><rect x="2" y="12" width="32" height="3.2" rx="1.6" fill="#D4D6DB"/><rect x="2" y="21" width="32" height="3.2" rx="1.6" fill="#D4D6DB"/><rect x="2" y="30" width="32" height="3.2" rx="1.6" fill="#D4D6DB"/></svg><div class="a" style="left:176px;top:20px;width:40px;height:40px;border-radius:10px;background:linear-gradient(225deg,#BD9B1F,#C8831B)"></div><div class="a t" style="left:180px;top:19.5px;height:43px;line-height:43px;font-size:27px;color:#FFFFFF;font-weight:normal;font-family:'Liberation Mono', monospace;letter-spacing:-1.6px;">MA</div><div class="a t" style="left:229px;top:19.5px;height:41px;line-height:41px;font-size:26px;color:#DFE1E5;font-weight:normal;font-family:'Liberation Sans', sans-serif;">MyApplication</div><svg class="a" style="left:404px;top:35px;" width="20" height="13" viewBox="0 0 20 13" fill="none"><path d="M1.5 1.5 L10.0 11 L18.5 1.5" stroke="#C9CCD1" stroke-width="2.2" fill="none" stroke-linecap="round" stroke-linejoin="round"/></svg><div class="a t" style="left:462px;top:22.0px;height:38px;line-height:38px;font-size:24px;color:#DFE1E5;font-weight:normal;font-family:'Liberation Sans', sans-serif;">版本控制</div><svg class="a" style="left:569px;top:35px;" width="20" height="13" viewBox="0 0 20 13" fill="none"><path d="M1.5 1.5 L10.0 11 L18.5 1.5" stroke="#C9CCD1" stroke-width="2.2" fill="none" stroke-linecap="round" stroke-linejoin="round"/></svg><svg class="a" style="left:974px;top:20px;" width="46" height="44" viewBox="0 0 46 44" fill="none"><path d="M3.5 3 L25 3 Q35 4.5 37.5 14 Q33 10.5 27 10.5 L25 10.5 L25 13 L14 13 L14 10.5 L3.5 10.5 Z" stroke="#D4D6DB" stroke-width="2.4" stroke-linejoin="round" fill="none"/><path d="M14.5 13.5 L24.5 13.5 L23.5 36 Q23.5 38 21.5 38 L17 38 Q15 38 15 36 Z" stroke="#D4D6DB" stroke-width="2.4" stroke-linejoin="round" fill="none"/><path d="M42 32 L42 42 L32 42 Z" fill="#D4D6DB"/></svg><svg class="a" style="left:1079px;top:20px;" width="42" height="40" viewBox="0 0 42 40" fill="none"><path d="M18.4 0.5 L29 17.3 L8 17.3 Z" fill="#C4C6CA"/><circle cx="32" cy="6.7" r="9" fill="#2B2D30"/><circle cx="32" cy="6.7" r="7" fill="#5AAE63"/><circle cx="9" cy="29.5" r="7.5" fill="#C4C6CA"/><rect x="21" y="22" width="16" height="15.7" fill="#F2C52B"/></svg><div class="a t" style="left:1126px;top:19.5px;height:41px;line-height:41px;font-size:26px;color:#DFE1E5;font-weight:normal;font-family:'Liberation Sans', sans-serif;">entry</div><svg class="a" style="left:1195px;top:36px;" width="22" height="14" viewBox="0 0 22 14" fill="none"><path d="M1.5 1.5 L11.0 12 L20.5 1.5" stroke="#C9CCD1" stroke-width="2.2" fill="none" stroke-linecap="round" stroke-linejoin="round"/></svg><svg class="a" style="left:1261px;top:22px;" width="32" height="38" viewBox="0 0 32 38" fill="none"><rect x="3" y="2" width="21" height="32" rx="5" stroke="#F0F0F0" stroke-width="2.6" fill="none"/><rect x="10" y="27" width="7" height="2" fill="#F0F0F0"/><circle cx="25" cy="30" r="4.5" fill="#1ED12E"/></svg><div class="a t" style="left:1303px;top:19.5px;height:41px;line-height:41px;font-size:26px;color:#DFE1E5;font-weight:normal;font-family:'Liberation Sans', sans-serif;letter-spacing:-0.28px;">HUAWEI Mate 70 Pro+[4WM0225106001533]</div><svg class="a" style="left:1834px;top:36px;" width="20" height="13" viewBox="0 0 20 13" fill="none"><path d="M1.5 1.5 L10.0 11 L18.5 1.5" stroke="#C9CCD1" stroke-width="2.2" fill="none" stroke-linecap="round" stroke-linejoin="round"/></svg><div class="a" style="left:1876px;top:10px;width:60px;height:60px;border-radius:10px;background:#589A5E"></div><svg class="a" style="left:1876px;top:10px;" width="60" height="60" viewBox="0 0 60 60" fill="none"><path d="M33 18.5 A12 12 0 1 0 24 39.6" stroke="#E8E8E8" stroke-width="2.8" fill="none"/><path d="M37 14.6 L37 24.6 L27.5 24.6" stroke="#E8E8E8" stroke-width="2.8" fill="none" stroke-linejoin="round"/><path d="M29.5 31 L42.5 38.2 L29.5 45.5 Z" stroke="#E8E8E8" stroke-width="2.8" fill="#589A5E" stroke-linejoin="round"/></svg><svg class="a" style="left:1958px;top:22px;" width="34" height="36" viewBox="0 0 34 36" fill="none"><path d="M10 11 Q10 4 15.5 4 Q21 4 21 11" stroke="#5FB865" stroke-width="2.6" fill="none"/><ellipse cx="15.5" cy="20" rx="8" ry="10.5" stroke="#5FB865" stroke-width="2.6" fill="none"/><path d="M1 19 L7 19 M24 19 L30 19 M2 9.5 L8 13 M29 9.5 L23 13 M2 28.5 L8 25 M29 28.5 L23 25" stroke="#5FB865" stroke-width="2.6"/></svg><div class="a" style="left:2012px;top:10px;width:60px;height:60px;border-radius:10px;background:#C84F4F"></div><div class="a" style="left:2028px;top:26px;width:28px;height:28px;border-radius:5px;border:3px solid #E6E6E6"></div><svg class="a" style="left:2094px;top:22px;" width="36" height="38" viewBox="0 0 36 38" fill="none"><path d="M17 8 A11.3 11.3 0 1 0 13 30.3" stroke="#27A55B" stroke-width="3.6" fill="none"/><path d="M16 8 L21 8" stroke="#27A55B" stroke-width="3.6"/><path d="M20 2 L30 8 L20 14 Z" fill="#27A55B"/><path d="M16 34 L26 24" stroke="#7A7A7A" stroke-width="3.6"/><path d="M20 18.5 L30 18.5 L30 28.5 Z" fill="#7A7A7A"/></svg><svg class="a" style="left:2162px;top:23px;" width="34" height="36" viewBox="0 0 34 36" fill="none"><path d="M10 11 Q10 4 15.5 4 Q21 4 21 11" stroke="#E6E6E6" stroke-width="2.2" fill="none"/><path d="M23.5 17 Q23.5 9.5 15.5 9.5 Q7.5 9.5 7.5 20 Q7.5 30.5 15.5 30.5 Q18 30.5 20 29" stroke="#E6E6E6" stroke-width="2.2" fill="none"/><path d="M1 19 L7 19 M2 9.5 L8 13 M29 9.5 L23 13 M2 28.5 L8 25" stroke="#E6E6E6" stroke-width="2.2"/><path d="M19 33 L31 21 M24 21 L31 21 L31 28" stroke="#E6E6E6" stroke-width="2.2" fill="none"/></svg><svg class="a" style="left:2242px;top:25px;" width="8" height="30" viewBox="0 0 8 30" fill="none"><circle cx="4" cy="4" r="2.6" fill="#D4D6DB"/><circle cx="4" cy="15" r="2.6" fill="#D4D6DB"/><circle cx="4" cy="26" r="2.6" fill="#D4D6DB"/></svg><svg class="a" style="left:2333px;top:21px;" width="38" height="38" viewBox="0 0 38 38" fill="none"><circle cx="19" cy="19" r="12" stroke="#B9BBBF" stroke-width="4" fill="none"/><circle cx="19" cy="19" r="5" fill="#B9BBBF"/><path d="M19 2 L19 7 M19 31 L19 36 M2 19 L7 19 M31 19 L36 19" stroke="#B9BBBF" stroke-width="2"/></svg><svg class="a" style="left:2412px;top:23px;" width="42" height="38" viewBox="0 0 42 38" fill="none"><path d="M36 15 L36 11 Q36 8 33 8 L18 8 L14 3 L6 3 Q3 3 3 6 L3 29 Q3 32 6 32 L17 32" stroke="#D4D6DB" stroke-width="2.4" fill="none" stroke-linejoin="round"/><rect x="30" y="18" width="8" height="8" rx="1.5" fill="#4D8DF5"/><rect x="20" y="28" width="8" height="8" rx="1.5" fill="#4D8DF5"/><rect x="30" y="28" width="8" height="8" rx="1.5" fill="#4D8DF5"/></svg><svg class="a" style="left:2495px;top:21px;" width="34" height="36" viewBox="0 0 34 36" fill="none"><circle cx="17" cy="9" r="6.5" stroke="#D4D6DB" stroke-width="2.4" fill="none"/><path d="M2.5 33 Q2.5 19 17 19 Q31.5 19 31.5 33 Z" stroke="#D4D6DB" stroke-width="2.4" fill="#3A3C40" stroke-linejoin="round"/></svg><svg class="a" style="left:2574px;top:23px;" width="38" height="38" viewBox="0 0 38 38" fill="none"><circle cx="15.5" cy="15.5" r="12.5" stroke="#D4D6DB" stroke-width="2.6" fill="none"/><path d="M25 25 L35 35" stroke="#D4D6DB" stroke-width="2.8" stroke-linecap="round"/></svg><svg class="a" style="left:2653px;top:22px;" width="36" height="36" viewBox="0 0 36 36" fill="none"><polygon points="18.0,2.0 22.1,2.5 24.2,7.2 26.8,9.2 31.9,10.0 33.5,13.9 30.5,18.0 30.1,21.2 31.9,26.0 29.3,29.3 24.2,28.8 21.2,30.1 18.0,34.0 13.9,33.5 11.8,28.8 9.2,26.8 4.1,26.0 2.5,22.1 5.5,18.0 5.9,14.8 4.1,10.0 6.7,6.7 11.8,7.2 14.8,5.9" stroke="#D4D6DB" stroke-width="2.4" fill="none" stroke-linejoin="round"/><circle cx="18.0" cy="18.0" r="5.3999999999999995" stroke="#D4D6DB" stroke-width="2.4" fill="none"/></svg><div class="a" style="left:2755px;top:37px;width:20px;height:3px;background:#D4D6DB"></div><svg class="a" style="left:2846px;top:27px;" width="26" height="26" viewBox="0 0 26 26" fill="none"><rect x="2" y="7" width="15" height="16" rx="3" stroke="#E6E6E6" stroke-width="2.2" fill="none"/><path d="M7 6 Q7 3 10 3 L21 3 Q24 3 24 6 L24 16 Q24 19 21 19" stroke="#E6E6E6" stroke-width="2.2" fill="none"/></svg><svg class="a" style="left:2940px;top:28px;" width="26" height="26" viewBox="0 0 26 26" fill="none"><path d="M3 3 L23 23 M23 3 L3 23" stroke="#E6E6E6" stroke-width="2.4"/></svg><div class="a" style="left:574px;top:82px;width:1288px;height:6px;background:#4A4C50"></div><div class="a" style="left:574px;top:161px;width:1355px;height:2px;background:#393B40"></div><svg class="a" style="left:603px;top:108px;" width="26" height="28" viewBox="0 0 26 28" fill="none"><path d="M9.5 2.5 Q5.5 2.5 5.5 6.5 L5.5 10.5 Q5.5 14 2 14 Q5.5 14 5.5 17.5 L5.5 21.5 Q5.5 25.5 9.5 25.5 M16.5 2.5 Q20.5 2.5 20.5 6.5 L20.5 10.5 Q20.5 14 24 14 Q20.5 14 20.5 17.5 L20.5 21.5 Q20.5 25.5 16.5 25.5" stroke="#A97BE6" stroke-width="2.7" stroke-linecap="round" stroke-linejoin="round"/></svg><div class="a t" style="left:642px;top:103.5px;height:40px;line-height:40px;font-size:25px;color:#DFE1E5;font-weight:normal;font-family:'Liberation Sans', sans-serif;">module.json5</div><svg class="a" style="left:882px;top:107px;" width="30" height="32" viewBox="0 0 30 32" fill="none"><path d="M4 8.8 L11.8 0.9 L11.8 8.8 Z" fill="#85909A"/><path d="M14.1 0.9 L24.1 0.9 L24.1 14.8 L3.9 14.8 L3.9 11.1 L14.1 11.1 Z" fill="#85909A"/><rect x="0" y="16.8" width="28" height="14.2" fill="#3A93B8"/><text x="14" y="29" font-family="Liberation Sans" font-size="13" fill="#2F3F4A" text-anchor="middle" letter-spacing="0.8">ETS</text></svg><div class="a t" style="left:923px;top:103.5px;height:40px;line-height:40px;font-size:25px;color:#DFE1E5;font-weight:normal;font-family:'Liberation Sans', sans-serif;">EntryAbility.ets</div><svg class="a" style="left:1180px;top:107px;" width="30" height="32" viewBox="0 0 30 32" fill="none"><path d="M4 8.8 L11.8 0.9 L11.8 8.8 Z" fill="#85909A"/><path d="M14.1 0.9 L24.1 0.9 L24.1 14.8 L3.9 14.8 L3.9 11.1 L14.1 11.1 Z" fill="#85909A"/><rect x="0" y="16.8" width="28" height="14.2" fill="#3A93B8"/><text x="14" y="29" font-family="Liberation Sans" font-size="13" fill="#2F3F4A" text-anchor="middle" letter-spacing="0.8">ETS</text></svg><div class="a t" style="left:1221px;top:103.5px;height:40px;line-height:40px;font-size:25px;color:#DFE1E5;font-weight:normal;font-family:'Liberation Sans', sans-serif;">Index.ets</div><svg class="a" style="left:1344px;top:113px;" width="20" height="20" viewBox="0 0 20 20" fill="none"><path d="M3 3 L17 17 M17 3 L3 17" stroke="#8C8F94" stroke-width="2.2"/></svg><div class="a" style="left:1154px;top:155px;width:232px;height:8px;background:#4E5157;border-radius:4px"></div><svg class="a" style="left:1410px;top:108px;" width="26" height="28" viewBox="0 0 26 28" fill="none"><path d="M9.5 2.5 Q5.5 2.5 5.5 6.5 L5.5 10.5 Q5.5 14 2 14 Q5.5 14 5.5 17.5 L5.5 21.5 Q5.5 25.5 9.5 25.5 M16.5 2.5 Q20.5 2.5 20.5 6.5 L20.5 10.5 Q20.5 14 24 14 Q20.5 14 20.5 17.5 L20.5 21.5 Q20.5 25.5 16.5 25.5" stroke="#A97BE6" stroke-width="2.7" stroke-linecap="round" stroke-linejoin="round"/></svg><div class="a t" style="left:1450px;top:103.5px;height:40px;line-height:40px;font-size:25px;color:#DFE1E5;font-weight:normal;font-family:'Liberation Sans', sans-serif;">app.json5</div><svg class="a" style="left:1647px;top:108px;" width="26" height="28" viewBox="0 0 26 28" fill="none"><path d="M9.5 2.5 Q5.5 2.5 5.5 6.5 L5.5 10.5 Q5.5 14 2 14 Q5.5 14 5.5 17.5 L5.5 21.5 Q5.5 25.5 9.5 25.5 M16.5 2.5 Q20.5 2.5 20.5 6.5 L20.5 10.5 Q20.5 14 24 14 Q20.5 14 20.5 17.5 L20.5 21.5 Q20.5 25.5 16.5 25.5" stroke="#A97BE6" stroke-width="2.7" stroke-linecap="round" stroke-linejoin="round"/></svg><div class="a" style="left:1686px;top:102px;width:115px;height:40px;overflow:hidden;-webkit-mask-image:linear-gradient(90deg,#000 75%,transparent)"><div class="a t" style="left:0px;top:1.5px;height:40px;line-height:40px;font-size:25px;color:#DFE1E5;font-weight:normal;font-family:'Liberation Sans', sans-serif;">string.json</div></div><svg class="a" style="left:1829px;top:115px;" width="22" height="14" viewBox="0 0 22 14" fill="none"><path d="M1.5 1.5 L11.0 12 L20.5 1.5" stroke="#C9CCD1" stroke-width="2.2" fill="none" stroke-linecap="round" stroke-linejoin="round"/></svg><svg class="a" style="left:1887px;top:107px;" width="8" height="31.0" viewBox="0 0 8 31.0" fill="none"><circle cx="4" cy="4.0" r="2.6" fill="#D4D6DB"/><circle cx="4" cy="15.5" r="2.6" fill="#D4D6DB"/><circle cx="4" cy="27.0" r="2.6" fill="#D4D6DB"/></svg><div class="a" style="left:10px;top:92px;width:60px;height:60px;border-radius:10px;background:#4A4B4F"></div><svg class="a" style="left:20px;top:104px;" width="40" height="36" viewBox="0 0 40 36" fill="none"><path d="M3 6 Q3 3 6 3 L15 3 L19 8 L34 8 Q37 8 37 11 L37 30 Q37 33 34 33 L6 33 Q3 33 3 30 Z" stroke="#DFE1E5" stroke-width="3" fill="none" stroke-linejoin="round"/></svg><div class="a" style="left:16px;top:172px;width:47px;height:2px;background:#43454A"></div><svg class="a" style="left:22px;top:206px;" width="36" height="36" viewBox="0 0 36 36" fill="none"><rect x="3.5" y="3.5" width="12" height="12" rx="3" stroke="#CED0D6" stroke-width="3"/><rect x="3.5" y="21" width="12" height="12" rx="3" stroke="#CED0D6" stroke-width="3"/><rect x="21" y="21" width="12" height="12" rx="3" stroke="#CED0D6" stroke-width="3"/></svg><svg class="a" style="left:22px;top:298px;" width="36" height="12" viewBox="0 0 36 12" fill="none"><circle cx="5" cy="6" r="3.2" fill="#CED0D6"/><circle cx="18" cy="6" r="3.2" fill="#CED0D6"/><circle cx="31" cy="6" r="3.2" fill="#CED0D6"/></svg><svg class="a" style="left:22px;top:1067px;" width="36" height="38" viewBox="0 0 36 38" fill="none"><rect x="3" y="5" width="30" height="29" rx="3" stroke="#CED0D6" stroke-width="2.4"/><path d="M11 2 L11 7 M24 2 L24 7 M10 15 L26 15 M10 22 L18 22" stroke="#CED0D6" stroke-width="2.4" stroke-linecap="round"/></svg><svg class="a" style="left:22px;top:1148px;" width="36" height="36" viewBox="0 0 36 36" fill="none"><rect x="3" y="3" width="30" height="30" rx="3" stroke="#CED0D6" stroke-width="2.4"/><path d="M3 12 L33 12 M13 12 L13 33 M13 22 L33 22" stroke="#CED0D6" stroke-width="2.4"/></svg><svg class="a" style="left:22px;top:1228px;" width="36" height="36" viewBox="0 0 36 36" fill="none"><path d="M3 6 Q3 3 6 3 L17 3 Q33 3 33 18 Q33 33 17 33 L6 33 Q3 33 3 30 Z" stroke="#CED0D6" stroke-width="2.4"/><text x="15.5" y="27" font-family="Liberation Sans" font-weight="bold" font-size="19" fill="#CED0D6" text-anchor="middle">P</text></svg><svg class="a" style="left:20px;top:1305px;" width="40" height="42" viewBox="0 0 40 42" fill="none"><path d="M3.5 3 L25 3 Q35 4.5 37.5 14 Q33 10.5 27 10.5 L25 10.5 L25 13 L14 13 L14 10.5 L3.5 10.5 Z" stroke="#CED0D6" stroke-width="2.4" stroke-linejoin="round"/><path d="M14.5 13.5 L24.5 13.5 L23.5 36 Q23.5 38 21.5 38 L17 38 Q15 38 15 36 Z" stroke="#CED0D6" stroke-width="2.4" stroke-linejoin="round"/></svg><svg class="a" style="left:20px;top:1390px;" width="42" height="38" viewBox="0 0 42 38" fill="none"><path d="M3 16 Q20 -4 37 16" stroke="#CED0D6" stroke-width="2.6"/><path d="M3 16 Q12 26 22 27" stroke="#CED0D6" stroke-width="2.6"/><path d="M24 14 A5 5 0 1 0 20 21" stroke="#CED0D6" stroke-width="2.6"/><path d="M25 20 L39 20 M27 27 L36 27 M29 34 L33 34" stroke="#CED0D6" stroke-width="2.6" stroke-linecap="round"/></svg><svg class="a" style="left:19px;top:1467px;" width="42" height="38" viewBox="0 0 42 38" fill="none"><path d="M11 3 L31 3 L40 19 L31 35 L11 35 L2 19 Z" stroke="#CED0D6" stroke-width="2.4" stroke-linejoin="round"/><path d="M16 11 L28 19 L16 27 Z" stroke="#CED0D6" stroke-width="2.4" stroke-linejoin="round"/></svg><div class="a" style="left:10px;top:1536px;width:60px;height:60px;border-radius:11px;background:#3574F0"></div><svg class="a" style="left:10px;top:1536px;" width="60" height="60" viewBox="0 0 60 60" fill="none"><path d="M18 14.5 L44 30.5 L18 46 Z" stroke="#FFFFFF" stroke-width="3.4" stroke-linejoin="round" fill="none"/><circle cx="43" cy="16.5" r="7" fill="#5AAE63"/></svg><svg class="a" style="left:20px;top:1628px;" width="40" height="36" viewBox="0 0 40 36" fill="none"><rect x="3" y="3" width="34" height="30" rx="2" stroke="#CED0D6" stroke-width="2.4"/><path d="M10 11 L16 16 L10 21 M19 24 L28 24" stroke="#CED0D6" stroke-width="2.4"/></svg><svg class="a" style="left:20px;top:1706px;" width="40" height="40" viewBox="0 0 40 40" fill="none"><circle cx="20" cy="20" r="17" stroke="#CED0D6" stroke-width="2.6"/><path d="M20 9 L20 23" stroke="#CED0D6" stroke-width="3.4" stroke-linecap="round"/><circle cx="20" cy="29" r="2.2" fill="#CED0D6"/></svg><svg class="a" style="left:22px;top:1786px;" width="36" height="40" viewBox="0 0 36 40" fill="none"><circle cx="8" cy="8" r="5.5" stroke="#CED0D6" stroke-width="2.4"/><circle cx="28" cy="13" r="5.5" stroke="#CED0D6" stroke-width="2.4"/><path d="M8 14 L8 38 M8 27 L18 27 Q28 27 28 19" stroke="#CED0D6" stroke-width="2.4"/></svg><svg class="a" style="left:2943px;top:102px;" width="40" height="40" viewBox="0 0 40 40" fill="none"><path d="M20 5 Q9 5 9 18 L9 26 L5 31 L35 31 L31 26 L31 18 Q31 5 20 5 Z" stroke="#CED0D6" stroke-width="2.6" stroke-linejoin="round"/><path d="M16 35 Q20 39 24 35" stroke="#CED0D6" stroke-width="2.6"/><circle cx="32" cy="7" r="6.5" fill="#E5534B"/></svg><svg class="a" style="left:2944px;top:184px;" width="36" height="36" viewBox="0 0 36 36" fill="none"><path d="M3 6 Q3 3 6 3 L18 3 Q33 3 33 18 Q33 33 18 33 L6 33 Q3 33 3 30 Z" stroke="#CED0D6" stroke-width="2.4"/><text x="18" y="26" font-family="Liberation Sans" font-weight="bold" font-size="20" fill="#CED0D6" text-anchor="middle">G</text></svg><div class="a" style="left:2932px;top:252px;width:60px;height:60px;border-radius:11px;background:#4A4B4F"></div><svg class="a" style="left:2942px;top:266px;" width="40" height="30" viewBox="0 0 40 30" fill="none"><path d="M2 15 Q20 -5 38 15 Q20 35 2 15 Z" stroke="#CED0D6" stroke-width="2.6" stroke-linejoin="round"/><circle cx="20" cy="15" r="5" stroke="#CED0D6" stroke-width="2.6"/></svg><svg class="a" style="left:2942px;top:342px;" width="40" height="40" viewBox="0 0 40 40" fill="none"><circle cx="20" cy="20" r="17" stroke="#CED0D6" stroke-width="2.6"/><path d="M4 16 Q12 8 20 16 Q28 24 36 16 M4 24 Q12 16 20 24 Q28 32 36 24" stroke="#CED0D6" stroke-width="2.6"/></svg><svg class="a" style="left:2942px;top:422px;" width="40" height="40" viewBox="0 0 40 40" fill="none"><circle cx="20" cy="21" r="16" stroke="#CED0D6" stroke-width="2.6"/><rect x="13" y="14" width="6" height="6" fill="#CED0D6"/><rect x="21" y="14" width="6" height="6" fill="#CED0D6"/><rect x="13" y="22" width="6" height="6" fill="#CED0D6"/><rect x="21" y="22" width="6" height="6" fill="#CED0D6"/><circle cx="20" cy="4" r="3" fill="#CED0D6"/><circle cx="5" cy="29" r="3" fill="#CED0D6"/><circle cx="35" cy="29" r="3" fill="#CED0D6"/></svg><div class="a" style="left:2938px;top:492px;width:48px;height:2px;background:#43454A"></div><svg class="a" style="left:2946px;top:522px;" width="32" height="44" viewBox="0 0 32 44" fill="none"><rect x="3" y="3" width="26" height="38" rx="5" stroke="#E6E6E6" stroke-width="3"/><path d="M12 34 L20 34" stroke="#E6E6E6" stroke-width="2.6"/></svg><div class="a t" style="left:1956px;top:105.0px;height:38px;line-height:38px;font-size:24px;color:#DFE1E5;font-weight:bold;font-family:'Liberation Sans', sans-serif;">预览器</div><div class="a" style="left:2606px;top:110px;width:25px;height:25px;border-radius:4px;background:#5E3536;border:2.5px solid #E05555"></div><svg class="a" style="left:2651px;top:107px;" width="40" height="32" viewBox="0 0 40 32" fill="none"><path d="M2 4 L22 4 M12 4 L12 29 M20 14 L36 14 M28 14 L28 29" stroke="#B9BBBF" stroke-width="4.5"/></svg><svg class="a" style="left:2707px;top:106px;" width="32" height="32" viewBox="0 0 32 32" fill="none"><path d="M26 11 A11 11 0 0 0 6 12 M6 21 A11 11 0 0 0 26 20" stroke="#B9BBBF" stroke-width="3.4" fill="none"/><path d="M27 4 L27 13 L19 13 Z M5 28 L5 19 L13 19 Z" fill="#B9BBBF"/></svg><svg class="a" style="left:2758px;top:104px;" width="34" height="36" viewBox="0 0 34 36" fill="none"><path d="M9 2 L9 8 M25 2 L25 8 M3 8 L31 8 L31 13 Q31 24 17 24 Q3 24 3 13 Z" stroke="#B9BBBF" stroke-width="2.6" fill="#B9BBBF" stroke-linejoin="round"/><path d="M17 24 L17 31 Q17 35 21 34 Q24 33 26 30 L30 30" stroke="#B9BBBF" stroke-width="2.2" fill="none"/></svg><svg class="a" style="left:2822px;top:107px;" width="8" height="31.0" viewBox="0 0 8 31.0" fill="none"><circle cx="4" cy="4.0" r="2.6" fill="#B9BBBF"/><circle cx="4" cy="15.5" r="2.6" fill="#B9BBBF"/><circle cx="4" cy="27.0" r="2.6" fill="#B9BBBF"/></svg><div class="a" style="left:2864px;top:121px;width:27px;height:3px;background:#D4D6DB"></div><div class="a" style="left:1931px;top:162px;width:988px;height:2px;background:#1E1F22"></div><div class="a t" style="left:1963px;top:173.0px;height:46px;line-height:46px;font-size:29px;color:#F0F0F0;font-weight:normal;font-family:'Liberation Sans', sans-serif;">entry : /pages/Index</div><div class="a" style="left:2475px;top:173px;width:100px;height:44px;border:2px solid #4A4C51;border-radius:9px"></div><svg class="a" style="left:2487px;top:182px;" width="28" height="26" viewBox="0 0 28 26" fill="none"><path d="M2 7 L2 2 L7 2 M21 2 L26 2 L26 7 M26 19 L26 24 L21 24 M7 24 L2 24 L2 19" stroke="#3D7BF5" stroke-width="2.2"/><path d="M4 13 Q14 2 24 13 Q14 24 4 13 Z" fill="#3D7BF5"/><circle cx="14" cy="13" r="3" fill="#2B2D30"/></svg><svg class="a" style="left:2535px;top:180px;" width="30" height="30" viewBox="0 0 30 30" fill="none"><path d="M15 2 L28 9 L15 16 L2 9 Z" fill="#D4D6DB"/><path d="M2 15 L15 22 L28 15 M2 21 L15 28 L28 21" stroke="#D4D6DB" stroke-width="2.4" fill="none"/></svg><div class="a" style="left:2592px;top:173px;width:99px;height:44px;border:2px solid #4A4C51;border-radius:9px"></div><svg class="a" style="left:2604px;top:181px;" width="28" height="28" viewBox="0 0 28 28" fill="none"><rect x="1" y="2" width="10" height="10" rx="2" fill="#D4D6DB"/><rect x="1" y="15" width="10" height="10" rx="2" fill="#D4D6DB"/><rect x="14" y="15" width="10" height="10" rx="2" fill="#D4D6DB"/><path d="M19 0 L25 7 L19 13 L13 7 Z" fill="#D4D6DB"/></svg><svg class="a" style="left:2653px;top:188px;" width="24" height="16" viewBox="0 0 24 16" fill="none"><path d="M1 1 L23 1 L12 15 Z" fill="#D4D6DB"/></svg><svg class="a" style="left:2706px;top:180px;" width="30" height="30" viewBox="0 0 30 30" fill="none"><rect x="4" y="4" width="22" height="22" stroke="#D4D6DB" stroke-width="2.4"/><rect x="1" y="1" width="6" height="6" fill="#D4D6DB"/><rect x="23" y="1" width="6" height="6" fill="#D4D6DB"/><rect x="1" y="23" width="6" height="6" fill="#D4D6DB"/><rect x="23" y="23" width="6" height="6" fill="#D4D6DB"/></svg><svg class="a" style="left:2750px;top:180px;" width="30" height="32" viewBox="0 0 30 32" fill="none"><circle cx="13" cy="13" r="11" stroke="#D4D6DB" stroke-width="2.4"/><path d="M7.5 13 L18.5 13" stroke="#D4D6DB" stroke-width="2.6"/><path d="M21 21 L27 28" stroke="#D4D6DB" stroke-width="2.6"/></svg><svg class="a" style="left:2794px;top:180px;" width="30" height="32" viewBox="0 0 30 32" fill="none"><circle cx="13" cy="13" r="11" stroke="#D4D6DB" stroke-width="2.4"/><path d="M7.5 13 L18.5 13 M13 7.5 L13 18.5" stroke="#D4D6DB" stroke-width="2.6"/><path d="M21 21 L27 28" stroke="#D4D6DB" stroke-width="2.6"/></svg><svg class="a" style="left:2838px;top:180px;" width="30" height="30" viewBox="0 0 30 30" fill="none"><rect x="3" y="3" width="24" height="24" rx="2" stroke="#D4D6DB" stroke-width="2.4"/><path d="M9 14 L9 9 L14 9 M21 16 L21 21 L16 21" stroke="#D4D6DB" stroke-width="2.4"/></svg><div class="a t" style="left:2882px;top:174.5px;height:43px;line-height:43px;font-size:27px;color:#D4D6DB;font-weight:bold;font-family:'Liberation Sans', sans-serif;letter-spacing:-2px;">1:1</div><div class="a" style="left:1931px;top:225px;width:988px;height:2px;background:#1E1F22"></div><div class="a t" style="left:2231px;top:462.0px;height:38px;line-height:38px;font-size:24px;color:#F0F0F0;font-weight:normal;font-family:'Liberation Sans', sans-serif;">Phone <span style="color:#8C8F94">(width: sma...</span></div><svg class="a" style="left:2473px;top:466px;" width="30" height="32" viewBox="0 0 30 32" fill="none"><path d="M27 2 L27 30 L3 16 Z" stroke="#D4D6DB" stroke-width="2.4" stroke-linejoin="round"/></svg><svg class="a" style="left:2523px;top:466px;" width="36" height="30" viewBox="0 0 36 30" fill="none"><rect x="2.5" y="1.5" width="13" height="26" rx="2.5" stroke="#D4D6DB" stroke-width="2.2"/><path d="M7 22 L11 22" stroke="#D4D6DB" stroke-width="2"/><path d="M18 12 L31 12 Q33 12 33 14 L33 25 Q33 27 31 27 L18 27" stroke="#D4D6DB" stroke-width="2.2"/></svg><svg class="a" style="left:2589px;top:467px;" width="8" height="28.4" viewBox="0 0 8 28.4" fill="none"><circle cx="4" cy="4.0" r="2.6" fill="#D4D6DB"/><circle cx="4" cy="14.2" r="2.6" fill="#D4D6DB"/><circle cx="4" cy="24.4" r="2.6" fill="#D4D6DB"/></svg><div class="a" style="left:2219px;top:523px;width:411px;height:866px;border-radius:50px;background:linear-gradient(180deg,#707070 0,#8a8a8a 603px,#d9d1bd 603px,#e6dfcc)"></div><div class="a" style="left:2221px;top:525px;width:407px;height:862px;border-radius:48px;background:linear-gradient(180deg,#262626 0,#333 601px,#7a7466 601px,#8e887a)"></div><div class="a" style="left:2224px;top:528px;width:401px;height:856px;border-radius:46px;background:linear-gradient(180deg,#a0a0a0 0,#b5b5b5 598px,#e3dbc8 598px,#d5cdb8)"></div><div class="a" style="left:2228px;top:532px;width:393px;height:848px;border-radius:43px;background:#151515"></div><div class="a" style="left:2230px;top:534px;width:389px;height:844px;border-radius:40px;overflow:hidden;background:#F1F3F5"><div class="a" style="left:0px;top:0px;width:389px;height:43px;background:#FFFFFF"></div><div class="a" style="left:0px;top:812px;width:389px;height:32px;background:#FFFFFF"></div></div><div class="a t" style="left:2424px;top:717.5px;height:35px;line-height:35px;font-size:22px;color:#2B3540;font-weight:bold;font-family:'Liberation Sans', sans-serif;transform:translateX(-50%);">Grid 组件示例</div><div class="a" style="left:2249px;top:770px;width:350px;height:431px;background:#FFFFFF;border-radius:12px"></div><div class="a" style="left:2263px;top:783px;width:74px;height:73px;background:#F5F5F5;border-radius:9px;display:flex;align-items:center;justify-content:center;font-size:16px;color:#41464C;font-family:'Liberation Sans', sans-serif">Item 1</div><div class="a" style="left:2348px;top:783px;width:74px;height:73px;background:#F5F5F5;border-radius:9px;display:flex;align-items:center;justify-content:center;font-size:16px;color:#41464C;font-family:'Liberation Sans', sans-serif">Item 2</div><div class="a" style="left:2432px;top:783px;width:74px;height:73px;background:#F5F5F5;border-radius:9px;display:flex;align-items:center;justify-content:center;font-size:16px;color:#41464C;font-family:'Liberation Sans', sans-serif">Item 3</div><div class="a" style="left:2517px;top:783px;width:74px;height:73px;background:#F5F5F5;border-radius:9px;display:flex;align-items:center;justify-content:center;font-size:16px;color:#41464C;font-family:'Liberation Sans', sans-serif">Item 4</div><div class="a" style="left:2263px;top:867px;width:74px;height:73px;background:#F5F5F5;border-radius:9px;display:flex;align-items:center;justify-content:center;font-size:16px;color:#41464C;font-family:'Liberation Sans', sans-serif">Item 5</div><div class="a" style="left:2348px;top:867px;width:74px;height:73px;background:#F5F5F5;border-radius:9px;display:flex;align-items:center;justify-content:center;font-size:16px;color:#41464C;font-family:'Liberation Sans', sans-serif">Item 6</div><div class="a" style="left:2432px;top:867px;width:74px;height:73px;background:#F5F5F5;border-radius:9px;display:flex;align-items:center;justify-content:center;font-size:16px;color:#41464C;font-family:'Liberation Sans', sans-serif">Item 7</div><div class="a" style="left:2517px;top:867px;width:74px;height:73px;background:#F5F5F5;border-radius:9px;display:flex;align-items:center;justify-content:center;font-size:16px;color:#41464C;font-family:'Liberation Sans', sans-serif">Item 8</div><div class="a" style="left:2263px;top:951px;width:74px;height:73px;background:#F5F5F5;border-radius:9px;display:flex;align-items:center;justify-content:center;font-size:16px;color:#41464C;font-family:'Liberation Sans', sans-serif">Item 9</div><div class="a" style="left:2348px;top:951px;width:74px;height:73px;background:#F5F5F5;border-radius:9px;display:flex;align-items:center;justify-content:center;font-size:16px;color:#41464C;font-family:'Liberation Sans', sans-serif">Item 10</div><div class="a" style="left:2432px;top:951px;width:74px;height:73px;background:#F5F5F5;border-radius:9px;display:flex;align-items:center;justify-content:center;font-size:16px;color:#41464C;font-family:'Liberation Sans', sans-serif">Item 11</div><div class="a" style="left:2517px;top:951px;width:74px;height:73px;background:#F5F5F5;border-radius:9px;display:flex;align-items:center;justify-content:center;font-size:16px;color:#41464C;font-family:'Liberation Sans', sans-serif">Item 12</div><div class="a" style="left:2263px;top:1035px;width:74px;height:73px;background:#F5F5F5;border-radius:9px;display:flex;align-items:center;justify-content:center;font-size:16px;color:#41464C;font-family:'Liberation Sans', sans-serif">Item 13</div><div class="a" style="left:2348px;top:1035px;width:74px;height:73px;background:#F5F5F5;border-radius:9px;display:flex;align-items:center;justify-content:center;font-size:16px;color:#41464C;font-family:'Liberation Sans', sans-serif">Item 14</div><div class="a" style="left:2432px;top:1035px;width:74px;height:73px;background:#F5F5F5;border-radius:9px;display:flex;align-items:center;justify-content:center;font-size:16px;color:#41464C;font-family:'Liberation Sans', sans-serif">Item 15</div><div class="a" style="left:2517px;top:1035px;width:74px;height:73px;background:#F5F5F5;border-radius:9px;display:flex;align-items:center;justify-content:center;font-size:16px;color:#41464C;font-family:'Liberation Sans', sans-serif">Item 16</div><div class="a" style="left:2263px;top:1119px;width:74px;height:73px;background:#F5F5F5;border-radius:9px;display:flex;align-items:center;justify-content:center;font-size:16px;color:#41464C;font-family:'Liberation Sans', sans-serif">Item 17</div><div class="a" style="left:2348px;top:1119px;width:74px;height:73px;background:#F5F5F5;border-radius:9px;display:flex;align-items:center;justify-content:center;font-size:16px;color:#41464C;font-family:'Liberation Sans', sans-serif">Item 18</div><div class="a" style="left:2432px;top:1119px;width:74px;height:73px;background:#F5F5F5;border-radius:9px;display:flex;align-items:center;justify-content:center;font-size:16px;color:#41464C;font-family:'Liberation Sans', sans-serif">Item 19</div><div class="a" style="left:2517px;top:1119px;width:74px;height:73px;background:#F5F5F5;border-radius:9px;display:flex;align-items:center;justify-content:center;font-size:16px;color:#41464C;font-family:'Liberation Sans', sans-serif">Item 22</div><div class="a t" style="left:107px;top:1730.5px;height:41px;line-height:41px;font-size:26px;color:#DFE1E5;font-weight:bold;font-family:'Liberation Sans', sans-serif;">Run</div><svg class="a" style="left:214px;top:1733px;" width="32" height="34" viewBox="0 0 32 34" fill="none"><path d="M14.4 1 L21.7 14.5 L7 14.5 Z" fill="#C4C6CA"/><circle cx="24.4" cy="6.7" r="7.2" fill="#2B2D30"/><circle cx="24.4" cy="6.7" r="5.5" fill="#5AAE63"/><circle cx="5.9" cy="25" r="6" fill="#C4C6CA"/><rect x="16" y="19" width="12" height="12" fill="#F2C52B"/></svg><div class="a t" style="left:252px;top:1730.5px;height:41px;line-height:41px;font-size:26px;color:#DFE1E5;font-weight:normal;font-family:'Liberation Sans', sans-serif;">entry</div><svg class="a" style="left:335px;top:1743px;" width="20" height="20" viewBox="0 0 20 20" fill="none"><path d="M3 3 L17 17 M17 3 L3 17" stroke="#8C8F94" stroke-width="2.2"/></svg><div class="a" style="left:188px;top:1786px;width:186px;height:6px;background:#3574F0;border-radius:3px"></div><svg class="a" style="left:104px;top:1808px;" width="36" height="38" viewBox="0 0 36 38" fill="none"><path d="M24 8 A12 12 0 1 0 14 32" stroke="#DFE1E5" stroke-width="2.4" fill="none"/><path d="M25 4 L25 10 L19 10" stroke="#DFE1E5" stroke-width="2.2" fill="none"/><path d="M19 22 L31 29 L19 36 Z" stroke="#5AAE63" stroke-width="2.4" fill="none" stroke-linejoin="round"/></svg><div class="a" style="left:162px;top:1814px;width:24px;height:24px;border-radius:4px;background:#5C3234;border:2.5px solid #E55A5A"></div><div class="a" style="left:206px;top:1806px;width:2px;height:40px;background:#43454A"></div><svg class="a" style="left:236px;top:1810px;" width="8" height="31.0" viewBox="0 0 8 31.0" fill="none"><circle cx="4" cy="4.0" r="2.6" fill="#D4D6DB"/><circle cx="4" cy="15.5" r="2.6" fill="#D4D6DB"/><circle cx="4" cy="27.0" r="2.6" fill="#D4D6DB"/></svg><svg class="a" style="left:2822px;top:1734px;" width="8" height="30" viewBox="0 0 8 30" fill="none"><circle cx="4" cy="4" r="2.6" fill="#D4D6DB"/><circle cx="4" cy="15" r="2.6" fill="#D4D6DB"/><circle cx="4" cy="26" r="2.6" fill="#D4D6DB"/></svg><div class="a" style="left:2866px;top:1748px;width:25px;height:3px;background:#D4D6DB"></div><div class="a" style="left:28px;top:1867px;width:16px;height:16px;border:2.5px solid #548AF7;border-radius:3px;background:#25324D"></div><div class="a t" style="left:53px;top:1854.5px;height:41px;line-height:41px;font-size:26px;color:#A8ABB0;font-weight:normal;font-family:'Liberation Sans', sans-serif;">MyApplication</div><svg class="a" style="left:235px;top:1865px;" width="14" height="20" viewBox="0 0 14 20" fill="none"><path d="M3 3 L10 10 L3 17" stroke="#A8ABB0" stroke-width="2.2" fill="none"/></svg><div class="a" style="left:266px;top:1867px;width:16px;height:16px;border:2.5px solid #548AF7;border-radius:3px;background:#25324D"></div><div class="a t" style="left:290px;top:1854.5px;height:41px;line-height:41px;font-size:26px;color:#A8ABB0;font-weight:normal;font-family:'Liberation Sans', sans-serif;">entry</div><svg class="a" style="left:367px;top:1865px;" width="14" height="20" viewBox="0 0 14 20" fill="none"><path d="M3 3 L10 10 L3 17" stroke="#A8ABB0" stroke-width="2.2" fill="none"/></svg><div class="a t" style="left:398px;top:1854.5px;height:41px;line-height:41px;font-size:26px;color:#A8ABB0;font-weight:normal;font-family:'Liberation Sans', sans-serif;">src</div><svg class="a" style="left:447px;top:1865px;" width="14" height="20" viewBox="0 0 14 20" fill="none"><path d="M3 3 L10 10 L3 17" stroke="#A8ABB0" stroke-width="2.2" fill="none"/></svg><div class="a t" style="left:478px;top:1854.5px;height:41px;line-height:41px;font-size:26px;color:#A8ABB0;font-weight:normal;font-family:'Liberation Sans', sans-serif;">main</div><svg class="a" style="left:553px;top:1865px;" width="14" height="20" viewBox="0 0 14 20" fill="none"><path d="M3 3 L10 10 L3 17" stroke="#A8ABB0" stroke-width="2.2" fill="none"/></svg><div class="a t" style="left:582px;top:1854.5px;height:41px;line-height:41px;font-size:26px;color:#A8ABB0;font-weight:normal;font-family:'Liberation Sans', sans-serif;">ets</div><svg class="a" style="left:633px;top:1865px;" width="14" height="20" viewBox="0 0 14 20" fill="none"><path d="M3 3 L10 10 L3 17" stroke="#A8ABB0" stroke-width="2.2" fill="none"/></svg><div class="a t" style="left:664px;top:1854.5px;height:41px;line-height:41px;font-size:26px;color:#A8ABB0;font-weight:normal;font-family:'Liberation Sans', sans-serif;">pages</div><svg class="a" style="left:753px;top:1865px;" width="14" height="20" viewBox="0 0 14 20" fill="none"><path d="M3 3 L10 10 L3 17" stroke="#A8ABB0" stroke-width="2.2" fill="none"/></svg><svg class="a" style="left:782px;top:1860px;" width="30" height="32" viewBox="0 0 30 32" fill="none"><path d="M4 8.8 L11.8 0.9 L11.8 8.8 Z" fill="#85909A"/><path d="M14.1 0.9 L24.1 0.9 L24.1 14.8 L3.9 14.8 L3.9 11.1 L14.1 11.1 Z" fill="#85909A"/><rect x="0" y="16.8" width="28" height="14.2" fill="#3A93B8"/><text x="14" y="29" font-family="Liberation Sans" font-size="13" fill="#2F3F4A" text-anchor="middle" letter-spacing="0.8">ETS</text></svg><div class="a t" style="left:820px;top:1854.5px;height:41px;line-height:41px;font-size:26px;color:#A8ABB0;font-weight:normal;font-family:'Liberation Sans', sans-serif;">Index.ets</div><div class="a" style="left:1639px;top:1911px;width:75px;height:5px;background:#3A3C40;border-radius:3px 3px 0 0"></div><div class="a" style="left:2423px;top:1840px;width:568px;height:61px;background:#FFFFFF;border-radius:11px;box-shadow:0 1px 4px rgba(0,0,0,0.5)"></div><svg class="a" style="left:2438px;top:1850px;" width="44" height="42" viewBox="0 0 44 42" fill="none"><path d="M35 9 Q20 3 10 9 Q4 14 9 19 Q14 22 24 22 Q34 23 32 30 Q28 37 7 33" stroke="#EE6A17" stroke-width="7.5" fill="none" stroke-linecap="round"/></svg><div class="a" style="left:2496px;top:1852px;width:1px;height:38px;background:#DDDDDD"></div><div class="a t" style="left:2517px;top:1847.5px;height:49px;line-height:49px;font-size:31px;color:#111111;font-weight:bold;font-family:'Liberation Sans', sans-serif;">中</div><svg class="a" style="left:2575px;top:1855px;" width="26" height="32" viewBox="0 0 26 32" fill="none"><circle cx="7" cy="7" r="4" stroke="#111" stroke-width="2"/><path d="M18 20 Q23 22 18 30" stroke="#111" stroke-width="3.5" stroke-linecap="round"/></svg><svg class="a" style="left:2626px;top:1853px;" width="38" height="38" viewBox="0 0 38 38" fill="none"><circle cx="18" cy="19" r="15" stroke="#111" stroke-width="2.4"/><circle cx="13" cy="16" r="2" fill="#111"/><circle cx="22" cy="16" r="2" fill="#111"/><path d="M11 23 Q18 29 25 23" stroke="#111" stroke-width="2.2"/><path d="M32 8 L36 8 M34 6 L34 10" stroke="#111" stroke-width="1.5"/></svg><svg class="a" style="left:2690px;top:1852px;" width="30" height="38" viewBox="0 0 30 38" fill="none"><rect x="8" y="2" width="14" height="22" rx="7" stroke="#111" stroke-width="2.4"/><path d="M3 18 Q3 30 15 30 Q27 30 27 18 M15 30 L15 37" stroke="#111" stroke-width="2.4"/></svg><svg class="a" style="left:2751px;top:1856px;" width="34" height="32" viewBox="0 0 34 32" fill="none"><rect x="2" y="2" width="30" height="28" rx="2" stroke="#111" stroke-width="2.4"/><path d="M8 10 L10 10 M13 10 L15 10 M18 10 L20 10 M23 10 L25 10 M8 15 L10 15 M13 15 L15 15 M18 15 L20 15 M23 15 L25 15 M10 22 L24 22" stroke="#111" stroke-width="2.2"/></svg><svg class="a" style="left:2811px;top:1852px;" width="40" height="38" viewBox="0 0 40 38" fill="none"><path d="M12 6 L4 11 L7 19 L11 17 L11 34 L29 34 L29 17 L33 19 L36 11 L28 6 Q20 12 12 6 Z" stroke="#111" stroke-width="2.4" stroke-linejoin="round"/><circle cx="34" cy="5" r="5.5" fill="#F5402C"/></svg><svg class="a" style="left:2876px;top:1853px;" width="34" height="36" viewBox="0 0 34 36" fill="none"><rect x="2" y="3" width="12" height="12" rx="1" stroke="#111" stroke-width="2.4"/><circle cx="25" cy="9" r="6" stroke="#111" stroke-width="2.4"/><rect x="2" y="21" width="12" height="12" rx="1" stroke="#111" stroke-width="2.4"/><rect x="19" y="21" width="12" height="12" rx="1" stroke="#111" stroke-width="2.4"/></svg><svg class="a" style="left:2932px;top:1850px;" width="48" height="44" viewBox="0 0 48 44" fill="none"><circle cx="22" cy="23" r="19" fill="#F4F4F4"/><path d="M8 18 L34 14 L36 22 L12 26 Z" fill="#E8641C"/><path d="M10 28 Q16 34 22 30" stroke="#333" stroke-width="2"/><path d="M40 4 L42 9 L47 11 L42 13 L40 18 L38 13 L33 11 L38 9 Z" fill="#F6C945"/></svg></body></html>
